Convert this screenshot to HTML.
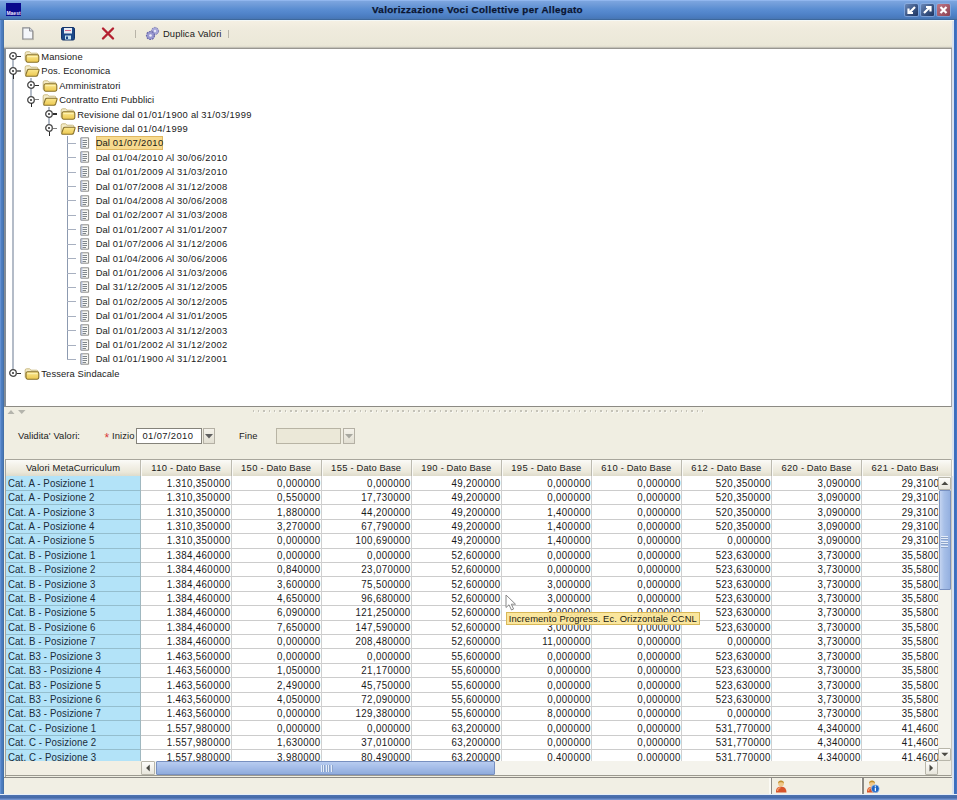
<!DOCTYPE html><html><head><meta charset="utf-8"><style>
*{margin:0;padding:0;box-sizing:border-box}
html,body{width:957px;height:800px;overflow:hidden;background:#f0eee2;font-family:"Liberation Sans", sans-serif;;color:#1c1c1c}
.a{position:absolute}
.t{position:absolute;white-space:pre;line-height:14.41px;height:14.41px;font-size:9.4px;letter-spacing:0.1px;color:#1a1a1a;margin-top:0.7px}
.d{letter-spacing:0.38px}
svg{position:absolute;overflow:visible}
</style></head><body>
<div class="a" style="left:0;top:0;width:4px;height:800px;background:linear-gradient(90deg,#74a0e0 0,#5080c4 1px,#4878b8 3px,#406898 4px)"></div>
<div class="a" style="left:953.5px;top:0;width:3.5px;height:800px;background:linear-gradient(90deg,#3c70c0,#3a6cbc 2px,#5a88d0 3.5px)"></div>
<div class="a" style="left:0;top:794px;width:957px;height:6px;background:linear-gradient(180deg,#e6eef8 0,#e6eef8 1px,#4e72b0 1px,#456aa8 4px,#6e8ecc 5px,#7896d0 6px)"></div>
<div class="a" style="left:0;top:0;width:957px;height:20px;background:linear-gradient(180deg,#9cc0f6 0,#7ba4de 1.5px,#6d9ad8 5px,#5b8ed2 9px,#5285cb 13px,#4a7bbf 17px,#4876b2 19px,#3e689c 19px,#3e689c 20px)"></div>
<div class="a" style="left:4px;top:20px;width:950px;height:1px;background:#f4f8f6"></div>
<div class="a" style="left:6px;top:3px;width:15px;height:13px;background:#0a0a8c"></div>
<div class="a" style="left:6px;top:10.5px;width:15px;height:5px;font-weight:bold;font-size:5px;line-height:5px;color:#e8e8ff;text-align:center;overflow:hidden">Maest</div>
<div class="a" style="left:372px;top:1px;height:20px;line-height:18px;font-weight:bold;font-size:9.8px;letter-spacing:0.36px;color:#0a1430;-webkit-text-stroke:0.25px #0a1430;white-space:pre">Valorizzazione Voci Collettive per Allegato</div>
<div class="a" style="left:905px;top:4px;width:12.5px;height:11.5px;border-radius:1.5px;background:linear-gradient(135deg,#6a88b8,#3a5584 55%,#1e3460);box-shadow:0 0 0 1px rgba(150,180,225,.6)"></div>
<svg style="left:905px;top:4px" width="13" height="12"><path d="M10 3 L4.5 8.5 M3.5 4.5 V9 H8" stroke="#fff" stroke-width="2.2" fill="none"/></svg>
<div class="a" style="left:921px;top:4px;width:12.5px;height:11.5px;border-radius:1.5px;background:linear-gradient(135deg,#6a88b8,#3a5584 55%,#1e3460);box-shadow:0 0 0 1px rgba(150,180,225,.6)"></div>
<svg style="left:921px;top:4px" width="13" height="12"><path d="M3 9 L8.5 3.5 M5 3 H9.5 V7.5" stroke="#fff" stroke-width="2.2" fill="none"/></svg>
<div class="a" style="left:937px;top:4px;width:12.5px;height:11.5px;border-radius:1.5px;background:linear-gradient(135deg,#c07888,#8c4050);box-shadow:0 0 0 1px rgba(150,180,225,.6)"></div>
<svg style="left:937px;top:4px" width="13" height="12"><path d="M3.5 3 L9.5 9 M9.5 3 L3.5 9" stroke="#fff" stroke-width="2.2" fill="none"/></svg>
<div class="a" style="left:4px;top:21px;width:950px;height:27px;background:linear-gradient(180deg,#f5f0e3 0,#efebdd 8px,#ebe8d8 24px,#dcd8c8 27px)"></div>
<div class="a" style="left:4px;top:47px;width:950px;height:1px;background:#c4c2b8"></div>
<div class="a" style="left:4px;top:48px;width:950px;height:1.3px;background:#989690"></div>
<svg style="left:22px;top:27px" width="12" height="13"><path d="M0.8 0.8 H7.5 L10.8 4 V12.2 H0.8 Z" fill="#f4f6fa" stroke="#8a8c90" stroke-width="1.2"/><path d="M7.5 0.8 V4 H10.8" fill="#d8dce4" stroke="#8a8c90" stroke-width="1"/><path d="M1.6 12.6 H11.4 V4.5" stroke="#b8b4aa" stroke-width="1" fill="none"/></svg>
<svg style="left:61px;top:27px" width="14" height="13"><rect x="0.5" y="0.5" width="13" height="12.5" rx="1.5" fill="#1c4888" stroke="#14346a"/><rect x="3" y="1" width="8" height="5.5" fill="#e8ecf4"/><rect x="4" y="3" width="6" height="1" fill="#d06a8a"/><rect x="4" y="8.5" width="6" height="4" fill="#c8e4f0"/><rect x="5" y="9.5" width="2" height="2.5" fill="#1c4888"/></svg>
<svg style="left:101px;top:27px" width="14" height="13"><path d="M2 1.5 L12 11.5 M12 1.5 L2 11.5" stroke="#b42030" stroke-width="2.4" stroke-linecap="round"/></svg>
<div class="a" style="left:135px;top:30px;width:1px;height:8px;background:#b8b4a8"></div>
<div class="a" style="left:228px;top:30px;width:1px;height:8px;background:#b8b4a8"></div>
<svg style="left:146px;top:27px" width="13" height="13"><circle cx="9" cy="4" r="3.6" fill="#a8a8d8" stroke="#7878b0" stroke-width="1" stroke-dasharray="1.6 1"/><circle cx="9" cy="4" r="1.2" fill="#e8e8f8"/><circle cx="4.5" cy="8.5" r="4" fill="#9898d0" stroke="#6868a8" stroke-width="1.2" stroke-dasharray="1.8 1"/><circle cx="4.5" cy="8.5" r="1.3" fill="#f0f0fa"/></svg>
<div class="t" style="left:163px;top:26.5px;">Duplica Valori</div>
<svg width="0" height="0" style="position:absolute"><defs><linearGradient id="fg" x1="0" y1="0" x2="0" y2="1"><stop offset="0" stop-color="#fbe890"/><stop offset="1" stop-color="#ecc850"/></linearGradient></defs></svg>
<div class="a" style="left:4px;top:49px;width:948px;height:358px;background:#fff;border-left:2px solid #848c96;border-right:1px solid #a4a8ac;border-bottom:1.5px solid #8c8a84"></div>
<div class="a" style="left:952px;top:21px;width:1.5px;height:773px;background:#d8e2f0"></div>
<div class="a" style="left:12.00px;top:59.90px;width:2px;height:310.02px;background:#b4bcc8"></div>
<div class="a" style="left:30.00px;top:78.31px;width:2px;height:17.82px;background:#b4bcc8"></div>
<div class="a" style="left:48.00px;top:107.13px;width:2px;height:17.82px;background:#b4bcc8"></div>
<div class="a" style="left:66.50px;top:135.95px;width:1.4px;height:223.56px;background:#8c9ab0"></div>
<svg style="left:9.40px;top:52.40px" width="8" height="8"><circle cx="4" cy="4" r="3.3" fill="#fff" stroke="#484848" stroke-width="1.3"/><circle cx="4" cy="4" r="1" fill="#303030"/></svg>
<div class="a" style="left:16.70px;top:55.80px;width:4.5px;height:1.3px;background:#303030"></div>
<svg style="left:23.90px;top:50.80px" width="16" height="12"><path d="M1.2 9.5 V2.2 Q1.2 0.8 2.6 0.8 H5.6 L7 2.2 H12.6 Q13.8 2.2 13.8 3.4 V5" fill="#f4ecc8" stroke="#cbbb84" stroke-width="1"/><rect x="2" y="3.8" width="12.8" height="7.4" rx="1.6" fill="url(#fg)" stroke="#86702c" stroke-width="1.1"/><rect x="3.4" y="5" width="10" height="1.2" fill="#fff6c0" opacity=".7"/></svg>
<div class="t" style="left:41.3px;top:49.20px">Mansione</div>
<svg style="left:9.40px;top:66.81px" width="8" height="8"><circle cx="4" cy="4" r="3.3" fill="#fff" stroke="#484848" stroke-width="1.3"/><circle cx="4" cy="4" r="1" fill="#303030"/></svg>
<div class="a" style="left:16.70px;top:70.21px;width:4.5px;height:1.3px;background:#808080"></div>
<div class="a" style="left:12.60px;top:74.11px;width:1.8px;height:4.5px;background:#282828"></div>
<svg style="left:23.90px;top:65.21px" width="16" height="12"><path d="M1.2 9.5 V2.2 Q1.2 0.8 2.6 0.8 H5.6 L7 2.2 H12.6 Q13.8 2.2 13.8 3.4 V5" fill="#f4ecc8" stroke="#cbbb84" stroke-width="1"/><path d="M2.8 11.2 Q1.4 11.2 1.8 9.8 L3.4 5.2 Q3.8 4.2 5 4.2 H14.2 Q15.4 4.2 15 5.4 L13.6 10 Q13.2 11.2 12 11.2 Z" fill="url(#fg)" stroke="#86702c" stroke-width="1.1"/></svg>
<div class="t" style="left:41.3px;top:63.61px">Pos. Economica</div>
<svg style="left:27.35px;top:81.22px" width="8" height="8"><circle cx="4" cy="4" r="3.3" fill="#fff" stroke="#484848" stroke-width="1.3"/><circle cx="4" cy="4" r="1" fill="#303030"/></svg>
<div class="a" style="left:34.65px;top:84.62px;width:4.5px;height:1.3px;background:#303030"></div>
<svg style="left:41.85px;top:79.62px" width="16" height="12"><path d="M1.2 9.5 V2.2 Q1.2 0.8 2.6 0.8 H5.6 L7 2.2 H12.6 Q13.8 2.2 13.8 3.4 V5" fill="#f4ecc8" stroke="#cbbb84" stroke-width="1"/><rect x="2" y="3.8" width="12.8" height="7.4" rx="1.6" fill="url(#fg)" stroke="#86702c" stroke-width="1.1"/><rect x="3.4" y="5" width="10" height="1.2" fill="#fff6c0" opacity=".7"/></svg>
<div class="t" style="left:59.25px;top:78.02px">Amministratori</div>
<svg style="left:27.35px;top:95.63px" width="8" height="8"><circle cx="4" cy="4" r="3.3" fill="#fff" stroke="#484848" stroke-width="1.3"/><circle cx="4" cy="4" r="1" fill="#303030"/></svg>
<div class="a" style="left:34.65px;top:99.03px;width:4.5px;height:1.3px;background:#808080"></div>
<div class="a" style="left:30.55px;top:102.93px;width:1.8px;height:4.5px;background:#282828"></div>
<svg style="left:41.85px;top:94.03px" width="16" height="12"><path d="M1.2 9.5 V2.2 Q1.2 0.8 2.6 0.8 H5.6 L7 2.2 H12.6 Q13.8 2.2 13.8 3.4 V5" fill="#f4ecc8" stroke="#cbbb84" stroke-width="1"/><path d="M2.8 11.2 Q1.4 11.2 1.8 9.8 L3.4 5.2 Q3.8 4.2 5 4.2 H14.2 Q15.4 4.2 15 5.4 L13.6 10 Q13.2 11.2 12 11.2 Z" fill="url(#fg)" stroke="#86702c" stroke-width="1.1"/></svg>
<div class="t" style="left:59.25px;top:92.42px">Contratto Enti Pubblici</div>
<svg style="left:45.30px;top:110.04px" width="8" height="8"><circle cx="4" cy="4" r="3.3" fill="#fff" stroke="#484848" stroke-width="1.3"/><circle cx="4" cy="4" r="1" fill="#303030"/></svg>
<div class="a" style="left:52.60px;top:113.44px;width:4.5px;height:1.3px;background:#303030"></div>
<svg style="left:59.80px;top:108.44px" width="16" height="12"><path d="M1.2 9.5 V2.2 Q1.2 0.8 2.6 0.8 H5.6 L7 2.2 H12.6 Q13.8 2.2 13.8 3.4 V5" fill="#f4ecc8" stroke="#cbbb84" stroke-width="1"/><rect x="2" y="3.8" width="12.8" height="7.4" rx="1.6" fill="url(#fg)" stroke="#86702c" stroke-width="1.1"/><rect x="3.4" y="5" width="10" height="1.2" fill="#fff6c0" opacity=".7"/></svg>
<div class="t" style="left:77.19999999999999px;top:106.83px">Revisione dal <span class="d">01/01/1900</span> al <span class="d">31/03/1999</span></div>
<svg style="left:45.30px;top:124.45px" width="8" height="8"><circle cx="4" cy="4" r="3.3" fill="#fff" stroke="#484848" stroke-width="1.3"/><circle cx="4" cy="4" r="1" fill="#303030"/></svg>
<div class="a" style="left:52.60px;top:127.85px;width:4.5px;height:1.3px;background:#808080"></div>
<div class="a" style="left:48.50px;top:131.75px;width:1.8px;height:4.5px;background:#282828"></div>
<svg style="left:59.80px;top:122.85px" width="16" height="12"><path d="M1.2 9.5 V2.2 Q1.2 0.8 2.6 0.8 H5.6 L7 2.2 H12.6 Q13.8 2.2 13.8 3.4 V5" fill="#f4ecc8" stroke="#cbbb84" stroke-width="1"/><path d="M2.8 11.2 Q1.4 11.2 1.8 9.8 L3.4 5.2 Q3.8 4.2 5 4.2 H14.2 Q15.4 4.2 15 5.4 L13.6 10 Q13.2 11.2 12 11.2 Z" fill="url(#fg)" stroke="#86702c" stroke-width="1.1"/></svg>
<div class="t" style="left:77.19999999999999px;top:121.24px">Revisione dal <span class="d">01/04/1999</span></div>
<div class="a" style="left:67.20px;top:143px;width:8.80px;height:1px;background:#a8b0c0"></div>
<svg style="left:80.00px;top:137.06px" width="10" height="12"><path d="M0.8 0.8 H8.6 V11.2 H0.8 Z" fill="#f8f8f4" stroke="#8c8c88" stroke-width="1"/><path d="M2.5 3.5 H7 M2.5 5.5 H7 M2.5 7.5 H7 M2.5 9.5 H6" stroke="#707880" stroke-width="0.9"/><path d="M1.8 0.3 V11.5" stroke="#a0b0e0" stroke-width="0.8"/></svg>
<div class="a" style="left:95.7px;top:136px;width:67.3px;height:13.8px;background:#f7da8e;border:1px solid #e0b860"></div>
<div class="t" style="left:95.7px;top:135.66px">Dal <span class="d">01/07/2010</span></div>
<div class="a" style="left:67.20px;top:157px;width:8.80px;height:1px;background:#a8b0c0"></div>
<svg style="left:80.00px;top:151.47px" width="10" height="12"><path d="M0.8 0.8 H8.6 V11.2 H0.8 Z" fill="#f8f8f4" stroke="#8c8c88" stroke-width="1"/><path d="M2.5 3.5 H7 M2.5 5.5 H7 M2.5 7.5 H7 M2.5 9.5 H6" stroke="#707880" stroke-width="0.9"/><path d="M1.8 0.3 V11.5" stroke="#a0b0e0" stroke-width="0.8"/></svg>
<div class="t" style="left:95.7px;top:150.06px">Dal <span class="d">01/04/2010</span> Al <span class="d">30/06/2010</span></div>
<div class="a" style="left:67.20px;top:172px;width:8.80px;height:1px;background:#a8b0c0"></div>
<svg style="left:80.00px;top:165.88px" width="10" height="12"><path d="M0.8 0.8 H8.6 V11.2 H0.8 Z" fill="#f8f8f4" stroke="#8c8c88" stroke-width="1"/><path d="M2.5 3.5 H7 M2.5 5.5 H7 M2.5 7.5 H7 M2.5 9.5 H6" stroke="#707880" stroke-width="0.9"/><path d="M1.8 0.3 V11.5" stroke="#a0b0e0" stroke-width="0.8"/></svg>
<div class="t" style="left:95.7px;top:164.47px">Dal <span class="d">01/01/2009</span> Al <span class="d">31/03/2010</span></div>
<div class="a" style="left:67.20px;top:186px;width:8.80px;height:1px;background:#a8b0c0"></div>
<svg style="left:80.00px;top:180.29px" width="10" height="12"><path d="M0.8 0.8 H8.6 V11.2 H0.8 Z" fill="#f8f8f4" stroke="#8c8c88" stroke-width="1"/><path d="M2.5 3.5 H7 M2.5 5.5 H7 M2.5 7.5 H7 M2.5 9.5 H6" stroke="#707880" stroke-width="0.9"/><path d="M1.8 0.3 V11.5" stroke="#a0b0e0" stroke-width="0.8"/></svg>
<div class="t" style="left:95.7px;top:178.88px">Dal <span class="d">01/07/2008</span> Al <span class="d">31/12/2008</span></div>
<div class="a" style="left:67.20px;top:200px;width:8.80px;height:1px;background:#a8b0c0"></div>
<svg style="left:80.00px;top:194.70px" width="10" height="12"><path d="M0.8 0.8 H8.6 V11.2 H0.8 Z" fill="#f8f8f4" stroke="#8c8c88" stroke-width="1"/><path d="M2.5 3.5 H7 M2.5 5.5 H7 M2.5 7.5 H7 M2.5 9.5 H6" stroke="#707880" stroke-width="0.9"/><path d="M1.8 0.3 V11.5" stroke="#a0b0e0" stroke-width="0.8"/></svg>
<div class="t" style="left:95.7px;top:193.29px">Dal <span class="d">01/04/2008</span> Al <span class="d">30/06/2008</span></div>
<div class="a" style="left:67.20px;top:215px;width:8.80px;height:1px;background:#a8b0c0"></div>
<svg style="left:80.00px;top:209.11px" width="10" height="12"><path d="M0.8 0.8 H8.6 V11.2 H0.8 Z" fill="#f8f8f4" stroke="#8c8c88" stroke-width="1"/><path d="M2.5 3.5 H7 M2.5 5.5 H7 M2.5 7.5 H7 M2.5 9.5 H6" stroke="#707880" stroke-width="0.9"/><path d="M1.8 0.3 V11.5" stroke="#a0b0e0" stroke-width="0.8"/></svg>
<div class="t" style="left:95.7px;top:207.70px">Dal <span class="d">01/02/2007</span> Al <span class="d">31/03/2008</span></div>
<div class="a" style="left:67.20px;top:229px;width:8.80px;height:1px;background:#a8b0c0"></div>
<svg style="left:80.00px;top:223.52px" width="10" height="12"><path d="M0.8 0.8 H8.6 V11.2 H0.8 Z" fill="#f8f8f4" stroke="#8c8c88" stroke-width="1"/><path d="M2.5 3.5 H7 M2.5 5.5 H7 M2.5 7.5 H7 M2.5 9.5 H6" stroke="#707880" stroke-width="0.9"/><path d="M1.8 0.3 V11.5" stroke="#a0b0e0" stroke-width="0.8"/></svg>
<div class="t" style="left:95.7px;top:222.12px">Dal <span class="d">01/01/2007</span> Al <span class="d">31/01/2007</span></div>
<div class="a" style="left:67.20px;top:244px;width:8.80px;height:1px;background:#a8b0c0"></div>
<svg style="left:80.00px;top:237.93px" width="10" height="12"><path d="M0.8 0.8 H8.6 V11.2 H0.8 Z" fill="#f8f8f4" stroke="#8c8c88" stroke-width="1"/><path d="M2.5 3.5 H7 M2.5 5.5 H7 M2.5 7.5 H7 M2.5 9.5 H6" stroke="#707880" stroke-width="0.9"/><path d="M1.8 0.3 V11.5" stroke="#a0b0e0" stroke-width="0.8"/></svg>
<div class="t" style="left:95.7px;top:236.53px">Dal <span class="d">01/07/2006</span> Al <span class="d">31/12/2006</span></div>
<div class="a" style="left:67.20px;top:258px;width:8.80px;height:1px;background:#a8b0c0"></div>
<svg style="left:80.00px;top:252.34px" width="10" height="12"><path d="M0.8 0.8 H8.6 V11.2 H0.8 Z" fill="#f8f8f4" stroke="#8c8c88" stroke-width="1"/><path d="M2.5 3.5 H7 M2.5 5.5 H7 M2.5 7.5 H7 M2.5 9.5 H6" stroke="#707880" stroke-width="0.9"/><path d="M1.8 0.3 V11.5" stroke="#a0b0e0" stroke-width="0.8"/></svg>
<div class="t" style="left:95.7px;top:250.93px">Dal <span class="d">01/04/2006</span> Al <span class="d">30/06/2006</span></div>
<div class="a" style="left:67.20px;top:273px;width:8.80px;height:1px;background:#a8b0c0"></div>
<svg style="left:80.00px;top:266.75px" width="10" height="12"><path d="M0.8 0.8 H8.6 V11.2 H0.8 Z" fill="#f8f8f4" stroke="#8c8c88" stroke-width="1"/><path d="M2.5 3.5 H7 M2.5 5.5 H7 M2.5 7.5 H7 M2.5 9.5 H6" stroke="#707880" stroke-width="0.9"/><path d="M1.8 0.3 V11.5" stroke="#a0b0e0" stroke-width="0.8"/></svg>
<div class="t" style="left:95.7px;top:265.35px">Dal <span class="d">01/01/2006</span> Al <span class="d">31/03/2006</span></div>
<div class="a" style="left:67.20px;top:287px;width:8.80px;height:1px;background:#a8b0c0"></div>
<svg style="left:80.00px;top:281.16px" width="10" height="12"><path d="M0.8 0.8 H8.6 V11.2 H0.8 Z" fill="#f8f8f4" stroke="#8c8c88" stroke-width="1"/><path d="M2.5 3.5 H7 M2.5 5.5 H7 M2.5 7.5 H7 M2.5 9.5 H6" stroke="#707880" stroke-width="0.9"/><path d="M1.8 0.3 V11.5" stroke="#a0b0e0" stroke-width="0.8"/></svg>
<div class="t" style="left:95.7px;top:279.75px">Dal <span class="d">31/12/2005</span> Al <span class="d">31/12/2005</span></div>
<div class="a" style="left:67.20px;top:301px;width:8.80px;height:1px;background:#a8b0c0"></div>
<svg style="left:80.00px;top:295.57px" width="10" height="12"><path d="M0.8 0.8 H8.6 V11.2 H0.8 Z" fill="#f8f8f4" stroke="#8c8c88" stroke-width="1"/><path d="M2.5 3.5 H7 M2.5 5.5 H7 M2.5 7.5 H7 M2.5 9.5 H6" stroke="#707880" stroke-width="0.9"/><path d="M1.8 0.3 V11.5" stroke="#a0b0e0" stroke-width="0.8"/></svg>
<div class="t" style="left:95.7px;top:294.17px">Dal <span class="d">01/02/2005</span> Al <span class="d">30/12/2005</span></div>
<div class="a" style="left:67.20px;top:316px;width:8.80px;height:1px;background:#a8b0c0"></div>
<svg style="left:80.00px;top:309.98px" width="10" height="12"><path d="M0.8 0.8 H8.6 V11.2 H0.8 Z" fill="#f8f8f4" stroke="#8c8c88" stroke-width="1"/><path d="M2.5 3.5 H7 M2.5 5.5 H7 M2.5 7.5 H7 M2.5 9.5 H6" stroke="#707880" stroke-width="0.9"/><path d="M1.8 0.3 V11.5" stroke="#a0b0e0" stroke-width="0.8"/></svg>
<div class="t" style="left:95.7px;top:308.57px">Dal <span class="d">01/01/2004</span> Al <span class="d">31/01/2005</span></div>
<div class="a" style="left:67.20px;top:330px;width:8.80px;height:1px;background:#a8b0c0"></div>
<svg style="left:80.00px;top:324.39px" width="10" height="12"><path d="M0.8 0.8 H8.6 V11.2 H0.8 Z" fill="#f8f8f4" stroke="#8c8c88" stroke-width="1"/><path d="M2.5 3.5 H7 M2.5 5.5 H7 M2.5 7.5 H7 M2.5 9.5 H6" stroke="#707880" stroke-width="0.9"/><path d="M1.8 0.3 V11.5" stroke="#a0b0e0" stroke-width="0.8"/></svg>
<div class="t" style="left:95.7px;top:322.99px">Dal <span class="d">01/01/2003</span> Al <span class="d">31/12/2003</span></div>
<div class="a" style="left:67.20px;top:345px;width:8.80px;height:1px;background:#a8b0c0"></div>
<svg style="left:80.00px;top:338.80px" width="10" height="12"><path d="M0.8 0.8 H8.6 V11.2 H0.8 Z" fill="#f8f8f4" stroke="#8c8c88" stroke-width="1"/><path d="M2.5 3.5 H7 M2.5 5.5 H7 M2.5 7.5 H7 M2.5 9.5 H6" stroke="#707880" stroke-width="0.9"/><path d="M1.8 0.3 V11.5" stroke="#a0b0e0" stroke-width="0.8"/></svg>
<div class="t" style="left:95.7px;top:337.39px">Dal <span class="d">01/01/2002</span> Al <span class="d">31/12/2002</span></div>
<div class="a" style="left:67.20px;top:359px;width:8.80px;height:1px;background:#a8b0c0"></div>
<svg style="left:80.00px;top:353.21px" width="10" height="12"><path d="M0.8 0.8 H8.6 V11.2 H0.8 Z" fill="#f8f8f4" stroke="#8c8c88" stroke-width="1"/><path d="M2.5 3.5 H7 M2.5 5.5 H7 M2.5 7.5 H7 M2.5 9.5 H6" stroke="#707880" stroke-width="0.9"/><path d="M1.8 0.3 V11.5" stroke="#a0b0e0" stroke-width="0.8"/></svg>
<div class="t" style="left:95.7px;top:351.81px">Dal <span class="d">01/01/1900</span> Al <span class="d">31/12/2001</span></div>
<svg style="left:9.40px;top:369.42px" width="8" height="8"><circle cx="4" cy="4" r="3.3" fill="#fff" stroke="#484848" stroke-width="1.3"/><circle cx="4" cy="4" r="1" fill="#303030"/></svg>
<div class="a" style="left:16.70px;top:372.82px;width:4.5px;height:1.3px;background:#303030"></div>
<svg style="left:23.90px;top:367.82px" width="16" height="12"><path d="M1.2 9.5 V2.2 Q1.2 0.8 2.6 0.8 H5.6 L7 2.2 H12.6 Q13.8 2.2 13.8 3.4 V5" fill="#f4ecc8" stroke="#cbbb84" stroke-width="1"/><rect x="2" y="3.8" width="12.8" height="7.4" rx="1.6" fill="url(#fg)" stroke="#86702c" stroke-width="1.1"/><rect x="3.4" y="5" width="10" height="1.2" fill="#fff6c0" opacity=".7"/></svg>
<div class="t" style="left:41.3px;top:366.21px">Tessera Sindacale</div>
<svg style="left:7px;top:408.5px" width="20" height="6"><path d="M0.5 5 L4 1 L7.5 5 Z" fill="#b4b4ac"/><path d="M11 1 L18.5 1 L14.75 5 Z" fill="#b4b4ac"/></svg>
<div class="a" style="left:252.50px;top:410px;width:1.6px;height:1.6px;background:#c4c2b8;box-shadow:0.8px 0.8px 0 #fcfcf8"></div><div class="a" style="left:257.85px;top:410px;width:1.6px;height:1.6px;background:#c4c2b8;box-shadow:0.8px 0.8px 0 #fcfcf8"></div><div class="a" style="left:263.20px;top:410px;width:1.6px;height:1.6px;background:#c4c2b8;box-shadow:0.8px 0.8px 0 #fcfcf8"></div><div class="a" style="left:268.55px;top:410px;width:1.6px;height:1.6px;background:#c4c2b8;box-shadow:0.8px 0.8px 0 #fcfcf8"></div><div class="a" style="left:273.90px;top:410px;width:1.6px;height:1.6px;background:#c4c2b8;box-shadow:0.8px 0.8px 0 #fcfcf8"></div><div class="a" style="left:279.25px;top:410px;width:1.6px;height:1.6px;background:#c4c2b8;box-shadow:0.8px 0.8px 0 #fcfcf8"></div><div class="a" style="left:284.60px;top:410px;width:1.6px;height:1.6px;background:#c4c2b8;box-shadow:0.8px 0.8px 0 #fcfcf8"></div><div class="a" style="left:289.95px;top:410px;width:1.6px;height:1.6px;background:#c4c2b8;box-shadow:0.8px 0.8px 0 #fcfcf8"></div><div class="a" style="left:295.30px;top:410px;width:1.6px;height:1.6px;background:#c4c2b8;box-shadow:0.8px 0.8px 0 #fcfcf8"></div><div class="a" style="left:300.65px;top:410px;width:1.6px;height:1.6px;background:#c4c2b8;box-shadow:0.8px 0.8px 0 #fcfcf8"></div><div class="a" style="left:306.00px;top:410px;width:1.6px;height:1.6px;background:#c4c2b8;box-shadow:0.8px 0.8px 0 #fcfcf8"></div><div class="a" style="left:311.35px;top:410px;width:1.6px;height:1.6px;background:#c4c2b8;box-shadow:0.8px 0.8px 0 #fcfcf8"></div><div class="a" style="left:316.70px;top:410px;width:1.6px;height:1.6px;background:#c4c2b8;box-shadow:0.8px 0.8px 0 #fcfcf8"></div><div class="a" style="left:322.05px;top:410px;width:1.6px;height:1.6px;background:#c4c2b8;box-shadow:0.8px 0.8px 0 #fcfcf8"></div><div class="a" style="left:327.40px;top:410px;width:1.6px;height:1.6px;background:#c4c2b8;box-shadow:0.8px 0.8px 0 #fcfcf8"></div><div class="a" style="left:332.75px;top:410px;width:1.6px;height:1.6px;background:#c4c2b8;box-shadow:0.8px 0.8px 0 #fcfcf8"></div><div class="a" style="left:338.10px;top:410px;width:1.6px;height:1.6px;background:#c4c2b8;box-shadow:0.8px 0.8px 0 #fcfcf8"></div><div class="a" style="left:343.45px;top:410px;width:1.6px;height:1.6px;background:#c4c2b8;box-shadow:0.8px 0.8px 0 #fcfcf8"></div><div class="a" style="left:348.80px;top:410px;width:1.6px;height:1.6px;background:#c4c2b8;box-shadow:0.8px 0.8px 0 #fcfcf8"></div><div class="a" style="left:354.15px;top:410px;width:1.6px;height:1.6px;background:#c4c2b8;box-shadow:0.8px 0.8px 0 #fcfcf8"></div><div class="a" style="left:359.50px;top:410px;width:1.6px;height:1.6px;background:#c4c2b8;box-shadow:0.8px 0.8px 0 #fcfcf8"></div><div class="a" style="left:364.85px;top:410px;width:1.6px;height:1.6px;background:#c4c2b8;box-shadow:0.8px 0.8px 0 #fcfcf8"></div><div class="a" style="left:370.20px;top:410px;width:1.6px;height:1.6px;background:#c4c2b8;box-shadow:0.8px 0.8px 0 #fcfcf8"></div><div class="a" style="left:375.55px;top:410px;width:1.6px;height:1.6px;background:#c4c2b8;box-shadow:0.8px 0.8px 0 #fcfcf8"></div><div class="a" style="left:380.90px;top:410px;width:1.6px;height:1.6px;background:#c4c2b8;box-shadow:0.8px 0.8px 0 #fcfcf8"></div><div class="a" style="left:386.25px;top:410px;width:1.6px;height:1.6px;background:#c4c2b8;box-shadow:0.8px 0.8px 0 #fcfcf8"></div><div class="a" style="left:391.60px;top:410px;width:1.6px;height:1.6px;background:#c4c2b8;box-shadow:0.8px 0.8px 0 #fcfcf8"></div><div class="a" style="left:396.95px;top:410px;width:1.6px;height:1.6px;background:#c4c2b8;box-shadow:0.8px 0.8px 0 #fcfcf8"></div><div class="a" style="left:402.30px;top:410px;width:1.6px;height:1.6px;background:#c4c2b8;box-shadow:0.8px 0.8px 0 #fcfcf8"></div><div class="a" style="left:407.65px;top:410px;width:1.6px;height:1.6px;background:#c4c2b8;box-shadow:0.8px 0.8px 0 #fcfcf8"></div><div class="a" style="left:413.00px;top:410px;width:1.6px;height:1.6px;background:#c4c2b8;box-shadow:0.8px 0.8px 0 #fcfcf8"></div><div class="a" style="left:418.35px;top:410px;width:1.6px;height:1.6px;background:#c4c2b8;box-shadow:0.8px 0.8px 0 #fcfcf8"></div><div class="a" style="left:423.70px;top:410px;width:1.6px;height:1.6px;background:#c4c2b8;box-shadow:0.8px 0.8px 0 #fcfcf8"></div><div class="a" style="left:429.05px;top:410px;width:1.6px;height:1.6px;background:#c4c2b8;box-shadow:0.8px 0.8px 0 #fcfcf8"></div><div class="a" style="left:434.40px;top:410px;width:1.6px;height:1.6px;background:#c4c2b8;box-shadow:0.8px 0.8px 0 #fcfcf8"></div><div class="a" style="left:439.75px;top:410px;width:1.6px;height:1.6px;background:#c4c2b8;box-shadow:0.8px 0.8px 0 #fcfcf8"></div><div class="a" style="left:445.10px;top:410px;width:1.6px;height:1.6px;background:#c4c2b8;box-shadow:0.8px 0.8px 0 #fcfcf8"></div><div class="a" style="left:450.45px;top:410px;width:1.6px;height:1.6px;background:#c4c2b8;box-shadow:0.8px 0.8px 0 #fcfcf8"></div><div class="a" style="left:455.80px;top:410px;width:1.6px;height:1.6px;background:#c4c2b8;box-shadow:0.8px 0.8px 0 #fcfcf8"></div><div class="a" style="left:461.15px;top:410px;width:1.6px;height:1.6px;background:#c4c2b8;box-shadow:0.8px 0.8px 0 #fcfcf8"></div><div class="a" style="left:466.50px;top:410px;width:1.6px;height:1.6px;background:#c4c2b8;box-shadow:0.8px 0.8px 0 #fcfcf8"></div><div class="a" style="left:471.85px;top:410px;width:1.6px;height:1.6px;background:#c4c2b8;box-shadow:0.8px 0.8px 0 #fcfcf8"></div><div class="a" style="left:477.20px;top:410px;width:1.6px;height:1.6px;background:#c4c2b8;box-shadow:0.8px 0.8px 0 #fcfcf8"></div><div class="a" style="left:482.55px;top:410px;width:1.6px;height:1.6px;background:#c4c2b8;box-shadow:0.8px 0.8px 0 #fcfcf8"></div><div class="a" style="left:487.90px;top:410px;width:1.6px;height:1.6px;background:#c4c2b8;box-shadow:0.8px 0.8px 0 #fcfcf8"></div><div class="a" style="left:493.25px;top:410px;width:1.6px;height:1.6px;background:#c4c2b8;box-shadow:0.8px 0.8px 0 #fcfcf8"></div><div class="a" style="left:498.60px;top:410px;width:1.6px;height:1.6px;background:#c4c2b8;box-shadow:0.8px 0.8px 0 #fcfcf8"></div><div class="a" style="left:503.95px;top:410px;width:1.6px;height:1.6px;background:#c4c2b8;box-shadow:0.8px 0.8px 0 #fcfcf8"></div><div class="a" style="left:509.30px;top:410px;width:1.6px;height:1.6px;background:#c4c2b8;box-shadow:0.8px 0.8px 0 #fcfcf8"></div><div class="a" style="left:514.65px;top:410px;width:1.6px;height:1.6px;background:#c4c2b8;box-shadow:0.8px 0.8px 0 #fcfcf8"></div><div class="a" style="left:520.00px;top:410px;width:1.6px;height:1.6px;background:#c4c2b8;box-shadow:0.8px 0.8px 0 #fcfcf8"></div><div class="a" style="left:525.35px;top:410px;width:1.6px;height:1.6px;background:#c4c2b8;box-shadow:0.8px 0.8px 0 #fcfcf8"></div><div class="a" style="left:530.70px;top:410px;width:1.6px;height:1.6px;background:#c4c2b8;box-shadow:0.8px 0.8px 0 #fcfcf8"></div><div class="a" style="left:536.05px;top:410px;width:1.6px;height:1.6px;background:#c4c2b8;box-shadow:0.8px 0.8px 0 #fcfcf8"></div><div class="a" style="left:541.40px;top:410px;width:1.6px;height:1.6px;background:#c4c2b8;box-shadow:0.8px 0.8px 0 #fcfcf8"></div><div class="a" style="left:546.75px;top:410px;width:1.6px;height:1.6px;background:#c4c2b8;box-shadow:0.8px 0.8px 0 #fcfcf8"></div><div class="a" style="left:552.10px;top:410px;width:1.6px;height:1.6px;background:#c4c2b8;box-shadow:0.8px 0.8px 0 #fcfcf8"></div><div class="a" style="left:557.45px;top:410px;width:1.6px;height:1.6px;background:#c4c2b8;box-shadow:0.8px 0.8px 0 #fcfcf8"></div><div class="a" style="left:562.80px;top:410px;width:1.6px;height:1.6px;background:#c4c2b8;box-shadow:0.8px 0.8px 0 #fcfcf8"></div><div class="a" style="left:568.15px;top:410px;width:1.6px;height:1.6px;background:#c4c2b8;box-shadow:0.8px 0.8px 0 #fcfcf8"></div><div class="a" style="left:573.50px;top:410px;width:1.6px;height:1.6px;background:#c4c2b8;box-shadow:0.8px 0.8px 0 #fcfcf8"></div><div class="a" style="left:578.85px;top:410px;width:1.6px;height:1.6px;background:#c4c2b8;box-shadow:0.8px 0.8px 0 #fcfcf8"></div><div class="a" style="left:584.20px;top:410px;width:1.6px;height:1.6px;background:#c4c2b8;box-shadow:0.8px 0.8px 0 #fcfcf8"></div><div class="a" style="left:589.55px;top:410px;width:1.6px;height:1.6px;background:#c4c2b8;box-shadow:0.8px 0.8px 0 #fcfcf8"></div><div class="a" style="left:594.90px;top:410px;width:1.6px;height:1.6px;background:#c4c2b8;box-shadow:0.8px 0.8px 0 #fcfcf8"></div><div class="a" style="left:600.25px;top:410px;width:1.6px;height:1.6px;background:#c4c2b8;box-shadow:0.8px 0.8px 0 #fcfcf8"></div><div class="a" style="left:605.60px;top:410px;width:1.6px;height:1.6px;background:#c4c2b8;box-shadow:0.8px 0.8px 0 #fcfcf8"></div><div class="a" style="left:610.95px;top:410px;width:1.6px;height:1.6px;background:#c4c2b8;box-shadow:0.8px 0.8px 0 #fcfcf8"></div><div class="a" style="left:616.30px;top:410px;width:1.6px;height:1.6px;background:#c4c2b8;box-shadow:0.8px 0.8px 0 #fcfcf8"></div><div class="a" style="left:621.65px;top:410px;width:1.6px;height:1.6px;background:#c4c2b8;box-shadow:0.8px 0.8px 0 #fcfcf8"></div><div class="a" style="left:627.00px;top:410px;width:1.6px;height:1.6px;background:#c4c2b8;box-shadow:0.8px 0.8px 0 #fcfcf8"></div><div class="a" style="left:632.35px;top:410px;width:1.6px;height:1.6px;background:#c4c2b8;box-shadow:0.8px 0.8px 0 #fcfcf8"></div><div class="a" style="left:637.70px;top:410px;width:1.6px;height:1.6px;background:#c4c2b8;box-shadow:0.8px 0.8px 0 #fcfcf8"></div><div class="a" style="left:643.05px;top:410px;width:1.6px;height:1.6px;background:#c4c2b8;box-shadow:0.8px 0.8px 0 #fcfcf8"></div><div class="a" style="left:648.40px;top:410px;width:1.6px;height:1.6px;background:#c4c2b8;box-shadow:0.8px 0.8px 0 #fcfcf8"></div><div class="a" style="left:653.75px;top:410px;width:1.6px;height:1.6px;background:#c4c2b8;box-shadow:0.8px 0.8px 0 #fcfcf8"></div><div class="a" style="left:659.10px;top:410px;width:1.6px;height:1.6px;background:#c4c2b8;box-shadow:0.8px 0.8px 0 #fcfcf8"></div><div class="a" style="left:664.45px;top:410px;width:1.6px;height:1.6px;background:#c4c2b8;box-shadow:0.8px 0.8px 0 #fcfcf8"></div><div class="a" style="left:669.80px;top:410px;width:1.6px;height:1.6px;background:#c4c2b8;box-shadow:0.8px 0.8px 0 #fcfcf8"></div><div class="a" style="left:675.15px;top:410px;width:1.6px;height:1.6px;background:#c4c2b8;box-shadow:0.8px 0.8px 0 #fcfcf8"></div><div class="a" style="left:680.50px;top:410px;width:1.6px;height:1.6px;background:#c4c2b8;box-shadow:0.8px 0.8px 0 #fcfcf8"></div><div class="a" style="left:685.85px;top:410px;width:1.6px;height:1.6px;background:#c4c2b8;box-shadow:0.8px 0.8px 0 #fcfcf8"></div><div class="a" style="left:691.20px;top:410px;width:1.6px;height:1.6px;background:#c4c2b8;box-shadow:0.8px 0.8px 0 #fcfcf8"></div><div class="a" style="left:696.55px;top:410px;width:1.6px;height:1.6px;background:#c4c2b8;box-shadow:0.8px 0.8px 0 #fcfcf8"></div><div class="a" style="left:701.90px;top:410px;width:1.6px;height:1.6px;background:#c4c2b8;box-shadow:0.8px 0.8px 0 #fcfcf8"></div>
<div class="t" style="left:18px;top:428.5px;">Validita' Valori:</div>
<div class="t" style="left:104.5px;top:430px;color:#d83838;font-size:12px;letter-spacing:0">*</div>
<div class="t" style="left:112px;top:428.5px;">Inizio</div>
<div class="a" style="left:136px;top:428px;width:65.5px;height:15.5px;background:#fff;border:1px solid #84827a"></div>
<div class="t" style="left:142.5px;top:428.5px;"><span class="d">01/07/2010</span></div>
<div class="a" style="left:203.3px;top:427.5px;width:12px;height:16px;background:linear-gradient(180deg,#f4f2ea,#e2dfd2);border:1px solid #b4b0a4"></div>
<svg style="left:203.3px;top:427.5px" width="12" height="16"><path d="M2 6 H10 L6 10.5 Z" fill="#606060"/></svg>
<div class="t" style="left:239px;top:428.5px;">Fine</div>
<div class="a" style="left:276px;top:428px;width:65px;height:15.5px;background:#ebe8d8;border:1px solid #b8b4a4"></div>
<div class="a" style="left:342.8px;top:427.5px;width:12px;height:16px;background:linear-gradient(180deg,#f4f2ea,#e2dfd2);border:1px solid #b4b0a4"></div>
<svg style="left:342.8px;top:427.5px" width="12" height="16"><path d="M2 6 H10 L6 10.5 Z" fill="#a8a8a0"/></svg>
<div class="a" style="left:5px;top:459.0px;width:946.5px;height:1px;background:#a8a69c"></div>
<div class="a" style="left:5px;top:460.0px;width:946.5px;height:16.0px;background:linear-gradient(180deg,#fbfbf8 0,#f4f2ea 5px,#ebe8da 12px,#dedbcb 16px)"></div>
<div class="a" style="left:5px;top:460.0px;width:1px;height:317px;background:#a4a4a0"></div>
<div class="a" style="left:140px;top:460.0px;width:1px;height:16.0px;background:#bcbab0"></div>
<div class="a" style="left:141px;top:460.0px;width:1px;height:16.0px;background:#fafaf6"></div>
<div class="a" style="left:231px;top:460.0px;width:1px;height:16.0px;background:#bcbab0"></div>
<div class="a" style="left:232px;top:460.0px;width:1px;height:16.0px;background:#fafaf6"></div>
<div class="a" style="left:321px;top:460.0px;width:1px;height:16.0px;background:#bcbab0"></div>
<div class="a" style="left:322px;top:460.0px;width:1px;height:16.0px;background:#fafaf6"></div>
<div class="a" style="left:411px;top:460.0px;width:1px;height:16.0px;background:#bcbab0"></div>
<div class="a" style="left:412px;top:460.0px;width:1px;height:16.0px;background:#fafaf6"></div>
<div class="a" style="left:501px;top:460.0px;width:1px;height:16.0px;background:#bcbab0"></div>
<div class="a" style="left:502px;top:460.0px;width:1px;height:16.0px;background:#fafaf6"></div>
<div class="a" style="left:591px;top:460.0px;width:1px;height:16.0px;background:#bcbab0"></div>
<div class="a" style="left:592px;top:460.0px;width:1px;height:16.0px;background:#fafaf6"></div>
<div class="a" style="left:681px;top:460.0px;width:1px;height:16.0px;background:#bcbab0"></div>
<div class="a" style="left:682px;top:460.0px;width:1px;height:16.0px;background:#fafaf6"></div>
<div class="a" style="left:771px;top:460.0px;width:1px;height:16.0px;background:#bcbab0"></div>
<div class="a" style="left:772px;top:460.0px;width:1px;height:16.0px;background:#fafaf6"></div>
<div class="a" style="left:861px;top:460.0px;width:1px;height:16.0px;background:#bcbab0"></div>
<div class="a" style="left:862px;top:460.0px;width:1px;height:16.0px;background:#fafaf6"></div>
<div class="a" style="left:951px;top:460.0px;width:1px;height:16.0px;background:#bcbab0"></div>
<div class="a" style="left:952px;top:460.0px;width:1px;height:16.0px;background:#fafaf6"></div>
<div class="t" style="left:5px;top:460.8px;width:136.0px;text-align:center;">Valori MetaCurriculum</div>
<div class="a" style="left:141.0px;top:460.0px;width:797.0px;height:16.0px;overflow:hidden">
<div class="t" style="left:0.00px;top:0.8px;width:90.06px;text-align:center;"><span class="d">110</span> - Dato Base</div>
<div class="t" style="left:90.06px;top:0.8px;width:90.06px;text-align:center;"><span class="d">150</span> - Dato Base</div>
<div class="t" style="left:180.12px;top:0.8px;width:90.06px;text-align:center;"><span class="d">155</span> - Dato Base</div>
<div class="t" style="left:270.18px;top:0.8px;width:90.06px;text-align:center;"><span class="d">190</span> - Dato Base</div>
<div class="t" style="left:360.24px;top:0.8px;width:90.06px;text-align:center;"><span class="d">195</span> - Dato Base</div>
<div class="t" style="left:450.30px;top:0.8px;width:90.06px;text-align:center;"><span class="d">610</span> - Dato Base</div>
<div class="t" style="left:540.36px;top:0.8px;width:90.06px;text-align:center;"><span class="d">612</span> - Dato Base</div>
<div class="t" style="left:630.42px;top:0.8px;width:90.06px;text-align:center;"><span class="d">620</span> - Dato Base</div>
<div class="t" style="left:720.48px;top:0.8px;width:90.06px;text-align:center;"><span class="d">621</span> - Dato Base</div>
</div>
<div class="a" style="left:6px;top:476.0px;width:135.00px;height:285.0px;background:#b3e3f8"></div>
<div class="a" style="left:141.00px;top:476.0px;width:797.00px;height:285.0px;background:#fff"></div>
<div class="a" style="left:6px;top:490px;width:135.00px;height:1px;background:#94bece"></div>
<div class="a" style="left:141.00px;top:490px;width:797.00px;height:1px;background:#cccccc"></div>
<div class="a" style="left:6px;top:504px;width:135.00px;height:1px;background:#94bece"></div>
<div class="a" style="left:141.00px;top:504px;width:797.00px;height:1px;background:#cccccc"></div>
<div class="a" style="left:6px;top:519px;width:135.00px;height:1px;background:#94bece"></div>
<div class="a" style="left:141.00px;top:519px;width:797.00px;height:1px;background:#cccccc"></div>
<div class="a" style="left:6px;top:533px;width:135.00px;height:1px;background:#94bece"></div>
<div class="a" style="left:141.00px;top:533px;width:797.00px;height:1px;background:#cccccc"></div>
<div class="a" style="left:6px;top:548px;width:135.00px;height:1px;background:#94bece"></div>
<div class="a" style="left:141.00px;top:548px;width:797.00px;height:1px;background:#cccccc"></div>
<div class="a" style="left:6px;top:562px;width:135.00px;height:1px;background:#94bece"></div>
<div class="a" style="left:141.00px;top:562px;width:797.00px;height:1px;background:#cccccc"></div>
<div class="a" style="left:6px;top:576px;width:135.00px;height:1px;background:#94bece"></div>
<div class="a" style="left:141.00px;top:576px;width:797.00px;height:1px;background:#cccccc"></div>
<div class="a" style="left:6px;top:591px;width:135.00px;height:1px;background:#94bece"></div>
<div class="a" style="left:141.00px;top:591px;width:797.00px;height:1px;background:#cccccc"></div>
<div class="a" style="left:6px;top:605px;width:135.00px;height:1px;background:#94bece"></div>
<div class="a" style="left:141.00px;top:605px;width:797.00px;height:1px;background:#cccccc"></div>
<div class="a" style="left:6px;top:620px;width:135.00px;height:1px;background:#94bece"></div>
<div class="a" style="left:141.00px;top:620px;width:797.00px;height:1px;background:#cccccc"></div>
<div class="a" style="left:6px;top:634px;width:135.00px;height:1px;background:#94bece"></div>
<div class="a" style="left:141.00px;top:634px;width:797.00px;height:1px;background:#cccccc"></div>
<div class="a" style="left:6px;top:648px;width:135.00px;height:1px;background:#94bece"></div>
<div class="a" style="left:141.00px;top:648px;width:797.00px;height:1px;background:#cccccc"></div>
<div class="a" style="left:6px;top:663px;width:135.00px;height:1px;background:#94bece"></div>
<div class="a" style="left:141.00px;top:663px;width:797.00px;height:1px;background:#cccccc"></div>
<div class="a" style="left:6px;top:677px;width:135.00px;height:1px;background:#94bece"></div>
<div class="a" style="left:141.00px;top:677px;width:797.00px;height:1px;background:#cccccc"></div>
<div class="a" style="left:6px;top:692px;width:135.00px;height:1px;background:#94bece"></div>
<div class="a" style="left:141.00px;top:692px;width:797.00px;height:1px;background:#cccccc"></div>
<div class="a" style="left:6px;top:706px;width:135.00px;height:1px;background:#94bece"></div>
<div class="a" style="left:141.00px;top:706px;width:797.00px;height:1px;background:#cccccc"></div>
<div class="a" style="left:6px;top:720px;width:135.00px;height:1px;background:#94bece"></div>
<div class="a" style="left:141.00px;top:720px;width:797.00px;height:1px;background:#cccccc"></div>
<div class="a" style="left:6px;top:735px;width:135.00px;height:1px;background:#94bece"></div>
<div class="a" style="left:141.00px;top:735px;width:797.00px;height:1px;background:#cccccc"></div>
<div class="a" style="left:6px;top:749px;width:135.00px;height:1px;background:#94bece"></div>
<div class="a" style="left:141.00px;top:749px;width:797.00px;height:1px;background:#cccccc"></div>
<div class="a" style="left:140px;top:476.0px;width:1px;height:285.0px;background:#a0b8c0"></div>
<div class="a" style="left:231px;top:476.0px;width:1px;height:285.0px;background:#d0d0d0"></div>
<div class="a" style="left:321px;top:476.0px;width:1px;height:285.0px;background:#d0d0d0"></div>
<div class="a" style="left:411px;top:476.0px;width:1px;height:285.0px;background:#d0d0d0"></div>
<div class="a" style="left:501px;top:476.0px;width:1px;height:285.0px;background:#d0d0d0"></div>
<div class="a" style="left:591px;top:476.0px;width:1px;height:285.0px;background:#d0d0d0"></div>
<div class="a" style="left:681px;top:476.0px;width:1px;height:285.0px;background:#d0d0d0"></div>
<div class="a" style="left:771px;top:476.0px;width:1px;height:285.0px;background:#d0d0d0"></div>
<div class="a" style="left:861px;top:476.0px;width:1px;height:285.0px;background:#d0d0d0"></div>
<div class="a" style="left:6px;top:476.0px;width:135.00px;height:285.0px;overflow:hidden">
<div class="t" style="left:2px;top:0.00px;color:#1c2c38;font-size:9.7px;margin-top:0.8px;transform:scaleY(1.09)">Cat. A - Posizione 1</div>
<div class="t" style="left:2px;top:14.41px;color:#1c2c38;font-size:9.7px;margin-top:0.8px;transform:scaleY(1.09)">Cat. A - Posizione 2</div>
<div class="t" style="left:2px;top:28.82px;color:#1c2c38;font-size:9.7px;margin-top:0.8px;transform:scaleY(1.09)">Cat. A - Posizione 3</div>
<div class="t" style="left:2px;top:43.23px;color:#1c2c38;font-size:9.7px;margin-top:0.8px;transform:scaleY(1.09)">Cat. A - Posizione 4</div>
<div class="t" style="left:2px;top:57.64px;color:#1c2c38;font-size:9.7px;margin-top:0.8px;transform:scaleY(1.09)">Cat. A - Posizione 5</div>
<div class="t" style="left:2px;top:72.05px;color:#1c2c38;font-size:9.7px;margin-top:0.8px;transform:scaleY(1.09)">Cat. B - Posizione 1</div>
<div class="t" style="left:2px;top:86.46px;color:#1c2c38;font-size:9.7px;margin-top:0.8px;transform:scaleY(1.09)">Cat. B - Posizione 2</div>
<div class="t" style="left:2px;top:100.87px;color:#1c2c38;font-size:9.7px;margin-top:0.8px;transform:scaleY(1.09)">Cat. B - Posizione 3</div>
<div class="t" style="left:2px;top:115.28px;color:#1c2c38;font-size:9.7px;margin-top:0.8px;transform:scaleY(1.09)">Cat. B - Posizione 4</div>
<div class="t" style="left:2px;top:129.69px;color:#1c2c38;font-size:9.7px;margin-top:0.8px;transform:scaleY(1.09)">Cat. B - Posizione 5</div>
<div class="t" style="left:2px;top:144.10px;color:#1c2c38;font-size:9.7px;margin-top:0.8px;transform:scaleY(1.09)">Cat. B - Posizione 6</div>
<div class="t" style="left:2px;top:158.51px;color:#1c2c38;font-size:9.7px;margin-top:0.8px;transform:scaleY(1.09)">Cat. B - Posizione 7</div>
<div class="t" style="left:2px;top:172.92px;color:#1c2c38;font-size:9.7px;margin-top:0.8px;transform:scaleY(1.09)">Cat. B3 - Posizione 3</div>
<div class="t" style="left:2px;top:187.33px;color:#1c2c38;font-size:9.7px;margin-top:0.8px;transform:scaleY(1.09)">Cat. B3 - Posizione 4</div>
<div class="t" style="left:2px;top:201.74px;color:#1c2c38;font-size:9.7px;margin-top:0.8px;transform:scaleY(1.09)">Cat. B3 - Posizione 5</div>
<div class="t" style="left:2px;top:216.15px;color:#1c2c38;font-size:9.7px;margin-top:0.8px;transform:scaleY(1.09)">Cat. B3 - Posizione 6</div>
<div class="t" style="left:2px;top:230.56px;color:#1c2c38;font-size:9.7px;margin-top:0.8px;transform:scaleY(1.09)">Cat. B3 - Posizione 7</div>
<div class="t" style="left:2px;top:244.97px;color:#1c2c38;font-size:9.7px;margin-top:0.8px;transform:scaleY(1.09)">Cat. C - Posizione 1</div>
<div class="t" style="left:2px;top:259.38px;color:#1c2c38;font-size:9.7px;margin-top:0.8px;transform:scaleY(1.09)">Cat. C - Posizione 2</div>
<div class="t" style="left:2px;top:273.79px;color:#1c2c38;font-size:9.7px;margin-top:0.8px;transform:scaleY(1.09)">Cat. C - Posizione 3</div>
</div>
<div class="a" style="left:141.00px;top:476.0px;width:797.00px;height:285.0px;overflow:hidden">
<div class="t" style="left:0.00px;top:0.00px;width:89.46px;text-align:right;font-size:9.7px;margin-top:0.8px;transform:scaleY(1.09);color:#1a1a1a"><span class="d">1.310,350000</span></div>
<div class="t" style="left:90.06px;top:0.00px;width:89.46px;text-align:right;font-size:9.7px;margin-top:0.8px;transform:scaleY(1.09);color:#1a1a1a"><span class="d">0,000000</span></div>
<div class="t" style="left:180.12px;top:0.00px;width:89.46px;text-align:right;font-size:9.7px;margin-top:0.8px;transform:scaleY(1.09);color:#1a1a1a"><span class="d">0,000000</span></div>
<div class="t" style="left:270.18px;top:0.00px;width:89.46px;text-align:right;font-size:9.7px;margin-top:0.8px;transform:scaleY(1.09);color:#1a1a1a"><span class="d">49,200000</span></div>
<div class="t" style="left:360.24px;top:0.00px;width:89.46px;text-align:right;font-size:9.7px;margin-top:0.8px;transform:scaleY(1.09);color:#1a1a1a"><span class="d">0,000000</span></div>
<div class="t" style="left:450.30px;top:0.00px;width:89.46px;text-align:right;font-size:9.7px;margin-top:0.8px;transform:scaleY(1.09);color:#1a1a1a"><span class="d">0,000000</span></div>
<div class="t" style="left:540.36px;top:0.00px;width:89.46px;text-align:right;font-size:9.7px;margin-top:0.8px;transform:scaleY(1.09);color:#1a1a1a"><span class="d">520,350000</span></div>
<div class="t" style="left:630.42px;top:0.00px;width:89.46px;text-align:right;font-size:9.7px;margin-top:0.8px;transform:scaleY(1.09);color:#1a1a1a"><span class="d">3,090000</span></div>
<div class="t" style="left:720.48px;top:0.00px;width:89.46px;text-align:right;font-size:9.7px;margin-top:0.8px;transform:scaleY(1.09);color:#1a1a1a"><span class="d">29,310000</span></div>
<div class="t" style="left:0.00px;top:14.41px;width:89.46px;text-align:right;font-size:9.7px;margin-top:0.8px;transform:scaleY(1.09);color:#1a1a1a"><span class="d">1.310,350000</span></div>
<div class="t" style="left:90.06px;top:14.41px;width:89.46px;text-align:right;font-size:9.7px;margin-top:0.8px;transform:scaleY(1.09);color:#1a1a1a"><span class="d">0,550000</span></div>
<div class="t" style="left:180.12px;top:14.41px;width:89.46px;text-align:right;font-size:9.7px;margin-top:0.8px;transform:scaleY(1.09);color:#1a1a1a"><span class="d">17,730000</span></div>
<div class="t" style="left:270.18px;top:14.41px;width:89.46px;text-align:right;font-size:9.7px;margin-top:0.8px;transform:scaleY(1.09);color:#1a1a1a"><span class="d">49,200000</span></div>
<div class="t" style="left:360.24px;top:14.41px;width:89.46px;text-align:right;font-size:9.7px;margin-top:0.8px;transform:scaleY(1.09);color:#1a1a1a"><span class="d">0,000000</span></div>
<div class="t" style="left:450.30px;top:14.41px;width:89.46px;text-align:right;font-size:9.7px;margin-top:0.8px;transform:scaleY(1.09);color:#1a1a1a"><span class="d">0,000000</span></div>
<div class="t" style="left:540.36px;top:14.41px;width:89.46px;text-align:right;font-size:9.7px;margin-top:0.8px;transform:scaleY(1.09);color:#1a1a1a"><span class="d">520,350000</span></div>
<div class="t" style="left:630.42px;top:14.41px;width:89.46px;text-align:right;font-size:9.7px;margin-top:0.8px;transform:scaleY(1.09);color:#1a1a1a"><span class="d">3,090000</span></div>
<div class="t" style="left:720.48px;top:14.41px;width:89.46px;text-align:right;font-size:9.7px;margin-top:0.8px;transform:scaleY(1.09);color:#1a1a1a"><span class="d">29,310000</span></div>
<div class="t" style="left:0.00px;top:28.82px;width:89.46px;text-align:right;font-size:9.7px;margin-top:0.8px;transform:scaleY(1.09);color:#1a1a1a"><span class="d">1.310,350000</span></div>
<div class="t" style="left:90.06px;top:28.82px;width:89.46px;text-align:right;font-size:9.7px;margin-top:0.8px;transform:scaleY(1.09);color:#1a1a1a"><span class="d">1,880000</span></div>
<div class="t" style="left:180.12px;top:28.82px;width:89.46px;text-align:right;font-size:9.7px;margin-top:0.8px;transform:scaleY(1.09);color:#1a1a1a"><span class="d">44,200000</span></div>
<div class="t" style="left:270.18px;top:28.82px;width:89.46px;text-align:right;font-size:9.7px;margin-top:0.8px;transform:scaleY(1.09);color:#1a1a1a"><span class="d">49,200000</span></div>
<div class="t" style="left:360.24px;top:28.82px;width:89.46px;text-align:right;font-size:9.7px;margin-top:0.8px;transform:scaleY(1.09);color:#1a1a1a"><span class="d">1,400000</span></div>
<div class="t" style="left:450.30px;top:28.82px;width:89.46px;text-align:right;font-size:9.7px;margin-top:0.8px;transform:scaleY(1.09);color:#1a1a1a"><span class="d">0,000000</span></div>
<div class="t" style="left:540.36px;top:28.82px;width:89.46px;text-align:right;font-size:9.7px;margin-top:0.8px;transform:scaleY(1.09);color:#1a1a1a"><span class="d">520,350000</span></div>
<div class="t" style="left:630.42px;top:28.82px;width:89.46px;text-align:right;font-size:9.7px;margin-top:0.8px;transform:scaleY(1.09);color:#1a1a1a"><span class="d">3,090000</span></div>
<div class="t" style="left:720.48px;top:28.82px;width:89.46px;text-align:right;font-size:9.7px;margin-top:0.8px;transform:scaleY(1.09);color:#1a1a1a"><span class="d">29,310000</span></div>
<div class="t" style="left:0.00px;top:43.23px;width:89.46px;text-align:right;font-size:9.7px;margin-top:0.8px;transform:scaleY(1.09);color:#1a1a1a"><span class="d">1.310,350000</span></div>
<div class="t" style="left:90.06px;top:43.23px;width:89.46px;text-align:right;font-size:9.7px;margin-top:0.8px;transform:scaleY(1.09);color:#1a1a1a"><span class="d">3,270000</span></div>
<div class="t" style="left:180.12px;top:43.23px;width:89.46px;text-align:right;font-size:9.7px;margin-top:0.8px;transform:scaleY(1.09);color:#1a1a1a"><span class="d">67,790000</span></div>
<div class="t" style="left:270.18px;top:43.23px;width:89.46px;text-align:right;font-size:9.7px;margin-top:0.8px;transform:scaleY(1.09);color:#1a1a1a"><span class="d">49,200000</span></div>
<div class="t" style="left:360.24px;top:43.23px;width:89.46px;text-align:right;font-size:9.7px;margin-top:0.8px;transform:scaleY(1.09);color:#1a1a1a"><span class="d">1,400000</span></div>
<div class="t" style="left:450.30px;top:43.23px;width:89.46px;text-align:right;font-size:9.7px;margin-top:0.8px;transform:scaleY(1.09);color:#1a1a1a"><span class="d">0,000000</span></div>
<div class="t" style="left:540.36px;top:43.23px;width:89.46px;text-align:right;font-size:9.7px;margin-top:0.8px;transform:scaleY(1.09);color:#1a1a1a"><span class="d">520,350000</span></div>
<div class="t" style="left:630.42px;top:43.23px;width:89.46px;text-align:right;font-size:9.7px;margin-top:0.8px;transform:scaleY(1.09);color:#1a1a1a"><span class="d">3,090000</span></div>
<div class="t" style="left:720.48px;top:43.23px;width:89.46px;text-align:right;font-size:9.7px;margin-top:0.8px;transform:scaleY(1.09);color:#1a1a1a"><span class="d">29,310000</span></div>
<div class="t" style="left:0.00px;top:57.64px;width:89.46px;text-align:right;font-size:9.7px;margin-top:0.8px;transform:scaleY(1.09);color:#1a1a1a"><span class="d">1.310,350000</span></div>
<div class="t" style="left:90.06px;top:57.64px;width:89.46px;text-align:right;font-size:9.7px;margin-top:0.8px;transform:scaleY(1.09);color:#1a1a1a"><span class="d">0,000000</span></div>
<div class="t" style="left:180.12px;top:57.64px;width:89.46px;text-align:right;font-size:9.7px;margin-top:0.8px;transform:scaleY(1.09);color:#1a1a1a"><span class="d">100,690000</span></div>
<div class="t" style="left:270.18px;top:57.64px;width:89.46px;text-align:right;font-size:9.7px;margin-top:0.8px;transform:scaleY(1.09);color:#1a1a1a"><span class="d">49,200000</span></div>
<div class="t" style="left:360.24px;top:57.64px;width:89.46px;text-align:right;font-size:9.7px;margin-top:0.8px;transform:scaleY(1.09);color:#1a1a1a"><span class="d">1,400000</span></div>
<div class="t" style="left:450.30px;top:57.64px;width:89.46px;text-align:right;font-size:9.7px;margin-top:0.8px;transform:scaleY(1.09);color:#1a1a1a"><span class="d">0,000000</span></div>
<div class="t" style="left:540.36px;top:57.64px;width:89.46px;text-align:right;font-size:9.7px;margin-top:0.8px;transform:scaleY(1.09);color:#1a1a1a"><span class="d">0,000000</span></div>
<div class="t" style="left:630.42px;top:57.64px;width:89.46px;text-align:right;font-size:9.7px;margin-top:0.8px;transform:scaleY(1.09);color:#1a1a1a"><span class="d">3,090000</span></div>
<div class="t" style="left:720.48px;top:57.64px;width:89.46px;text-align:right;font-size:9.7px;margin-top:0.8px;transform:scaleY(1.09);color:#1a1a1a"><span class="d">29,310000</span></div>
<div class="t" style="left:0.00px;top:72.05px;width:89.46px;text-align:right;font-size:9.7px;margin-top:0.8px;transform:scaleY(1.09);color:#1a1a1a"><span class="d">1.384,460000</span></div>
<div class="t" style="left:90.06px;top:72.05px;width:89.46px;text-align:right;font-size:9.7px;margin-top:0.8px;transform:scaleY(1.09);color:#1a1a1a"><span class="d">0,000000</span></div>
<div class="t" style="left:180.12px;top:72.05px;width:89.46px;text-align:right;font-size:9.7px;margin-top:0.8px;transform:scaleY(1.09);color:#1a1a1a"><span class="d">0,000000</span></div>
<div class="t" style="left:270.18px;top:72.05px;width:89.46px;text-align:right;font-size:9.7px;margin-top:0.8px;transform:scaleY(1.09);color:#1a1a1a"><span class="d">52,600000</span></div>
<div class="t" style="left:360.24px;top:72.05px;width:89.46px;text-align:right;font-size:9.7px;margin-top:0.8px;transform:scaleY(1.09);color:#1a1a1a"><span class="d">0,000000</span></div>
<div class="t" style="left:450.30px;top:72.05px;width:89.46px;text-align:right;font-size:9.7px;margin-top:0.8px;transform:scaleY(1.09);color:#1a1a1a"><span class="d">0,000000</span></div>
<div class="t" style="left:540.36px;top:72.05px;width:89.46px;text-align:right;font-size:9.7px;margin-top:0.8px;transform:scaleY(1.09);color:#1a1a1a"><span class="d">523,630000</span></div>
<div class="t" style="left:630.42px;top:72.05px;width:89.46px;text-align:right;font-size:9.7px;margin-top:0.8px;transform:scaleY(1.09);color:#1a1a1a"><span class="d">3,730000</span></div>
<div class="t" style="left:720.48px;top:72.05px;width:89.46px;text-align:right;font-size:9.7px;margin-top:0.8px;transform:scaleY(1.09);color:#1a1a1a"><span class="d">35,580000</span></div>
<div class="t" style="left:0.00px;top:86.46px;width:89.46px;text-align:right;font-size:9.7px;margin-top:0.8px;transform:scaleY(1.09);color:#1a1a1a"><span class="d">1.384,460000</span></div>
<div class="t" style="left:90.06px;top:86.46px;width:89.46px;text-align:right;font-size:9.7px;margin-top:0.8px;transform:scaleY(1.09);color:#1a1a1a"><span class="d">0,840000</span></div>
<div class="t" style="left:180.12px;top:86.46px;width:89.46px;text-align:right;font-size:9.7px;margin-top:0.8px;transform:scaleY(1.09);color:#1a1a1a"><span class="d">23,070000</span></div>
<div class="t" style="left:270.18px;top:86.46px;width:89.46px;text-align:right;font-size:9.7px;margin-top:0.8px;transform:scaleY(1.09);color:#1a1a1a"><span class="d">52,600000</span></div>
<div class="t" style="left:360.24px;top:86.46px;width:89.46px;text-align:right;font-size:9.7px;margin-top:0.8px;transform:scaleY(1.09);color:#1a1a1a"><span class="d">0,000000</span></div>
<div class="t" style="left:450.30px;top:86.46px;width:89.46px;text-align:right;font-size:9.7px;margin-top:0.8px;transform:scaleY(1.09);color:#1a1a1a"><span class="d">0,000000</span></div>
<div class="t" style="left:540.36px;top:86.46px;width:89.46px;text-align:right;font-size:9.7px;margin-top:0.8px;transform:scaleY(1.09);color:#1a1a1a"><span class="d">523,630000</span></div>
<div class="t" style="left:630.42px;top:86.46px;width:89.46px;text-align:right;font-size:9.7px;margin-top:0.8px;transform:scaleY(1.09);color:#1a1a1a"><span class="d">3,730000</span></div>
<div class="t" style="left:720.48px;top:86.46px;width:89.46px;text-align:right;font-size:9.7px;margin-top:0.8px;transform:scaleY(1.09);color:#1a1a1a"><span class="d">35,580000</span></div>
<div class="t" style="left:0.00px;top:100.87px;width:89.46px;text-align:right;font-size:9.7px;margin-top:0.8px;transform:scaleY(1.09);color:#1a1a1a"><span class="d">1.384,460000</span></div>
<div class="t" style="left:90.06px;top:100.87px;width:89.46px;text-align:right;font-size:9.7px;margin-top:0.8px;transform:scaleY(1.09);color:#1a1a1a"><span class="d">3,600000</span></div>
<div class="t" style="left:180.12px;top:100.87px;width:89.46px;text-align:right;font-size:9.7px;margin-top:0.8px;transform:scaleY(1.09);color:#1a1a1a"><span class="d">75,500000</span></div>
<div class="t" style="left:270.18px;top:100.87px;width:89.46px;text-align:right;font-size:9.7px;margin-top:0.8px;transform:scaleY(1.09);color:#1a1a1a"><span class="d">52,600000</span></div>
<div class="t" style="left:360.24px;top:100.87px;width:89.46px;text-align:right;font-size:9.7px;margin-top:0.8px;transform:scaleY(1.09);color:#1a1a1a"><span class="d">3,000000</span></div>
<div class="t" style="left:450.30px;top:100.87px;width:89.46px;text-align:right;font-size:9.7px;margin-top:0.8px;transform:scaleY(1.09);color:#1a1a1a"><span class="d">0,000000</span></div>
<div class="t" style="left:540.36px;top:100.87px;width:89.46px;text-align:right;font-size:9.7px;margin-top:0.8px;transform:scaleY(1.09);color:#1a1a1a"><span class="d">523,630000</span></div>
<div class="t" style="left:630.42px;top:100.87px;width:89.46px;text-align:right;font-size:9.7px;margin-top:0.8px;transform:scaleY(1.09);color:#1a1a1a"><span class="d">3,730000</span></div>
<div class="t" style="left:720.48px;top:100.87px;width:89.46px;text-align:right;font-size:9.7px;margin-top:0.8px;transform:scaleY(1.09);color:#1a1a1a"><span class="d">35,580000</span></div>
<div class="t" style="left:0.00px;top:115.28px;width:89.46px;text-align:right;font-size:9.7px;margin-top:0.8px;transform:scaleY(1.09);color:#1a1a1a"><span class="d">1.384,460000</span></div>
<div class="t" style="left:90.06px;top:115.28px;width:89.46px;text-align:right;font-size:9.7px;margin-top:0.8px;transform:scaleY(1.09);color:#1a1a1a"><span class="d">4,650000</span></div>
<div class="t" style="left:180.12px;top:115.28px;width:89.46px;text-align:right;font-size:9.7px;margin-top:0.8px;transform:scaleY(1.09);color:#1a1a1a"><span class="d">96,680000</span></div>
<div class="t" style="left:270.18px;top:115.28px;width:89.46px;text-align:right;font-size:9.7px;margin-top:0.8px;transform:scaleY(1.09);color:#1a1a1a"><span class="d">52,600000</span></div>
<div class="t" style="left:360.24px;top:115.28px;width:89.46px;text-align:right;font-size:9.7px;margin-top:0.8px;transform:scaleY(1.09);color:#1a1a1a"><span class="d">3,000000</span></div>
<div class="t" style="left:450.30px;top:115.28px;width:89.46px;text-align:right;font-size:9.7px;margin-top:0.8px;transform:scaleY(1.09);color:#1a1a1a"><span class="d">0,000000</span></div>
<div class="t" style="left:540.36px;top:115.28px;width:89.46px;text-align:right;font-size:9.7px;margin-top:0.8px;transform:scaleY(1.09);color:#1a1a1a"><span class="d">523,630000</span></div>
<div class="t" style="left:630.42px;top:115.28px;width:89.46px;text-align:right;font-size:9.7px;margin-top:0.8px;transform:scaleY(1.09);color:#1a1a1a"><span class="d">3,730000</span></div>
<div class="t" style="left:720.48px;top:115.28px;width:89.46px;text-align:right;font-size:9.7px;margin-top:0.8px;transform:scaleY(1.09);color:#1a1a1a"><span class="d">35,580000</span></div>
<div class="t" style="left:0.00px;top:129.69px;width:89.46px;text-align:right;font-size:9.7px;margin-top:0.8px;transform:scaleY(1.09);color:#1a1a1a"><span class="d">1.384,460000</span></div>
<div class="t" style="left:90.06px;top:129.69px;width:89.46px;text-align:right;font-size:9.7px;margin-top:0.8px;transform:scaleY(1.09);color:#1a1a1a"><span class="d">6,090000</span></div>
<div class="t" style="left:180.12px;top:129.69px;width:89.46px;text-align:right;font-size:9.7px;margin-top:0.8px;transform:scaleY(1.09);color:#1a1a1a"><span class="d">121,250000</span></div>
<div class="t" style="left:270.18px;top:129.69px;width:89.46px;text-align:right;font-size:9.7px;margin-top:0.8px;transform:scaleY(1.09);color:#1a1a1a"><span class="d">52,600000</span></div>
<div class="t" style="left:360.24px;top:129.69px;width:89.46px;text-align:right;font-size:9.7px;margin-top:0.8px;transform:scaleY(1.09);color:#1a1a1a"><span class="d">3,000000</span></div>
<div class="t" style="left:450.30px;top:129.69px;width:89.46px;text-align:right;font-size:9.7px;margin-top:0.8px;transform:scaleY(1.09);color:#1a1a1a"><span class="d">0,000000</span></div>
<div class="t" style="left:540.36px;top:129.69px;width:89.46px;text-align:right;font-size:9.7px;margin-top:0.8px;transform:scaleY(1.09);color:#1a1a1a"><span class="d">523,630000</span></div>
<div class="t" style="left:630.42px;top:129.69px;width:89.46px;text-align:right;font-size:9.7px;margin-top:0.8px;transform:scaleY(1.09);color:#1a1a1a"><span class="d">3,730000</span></div>
<div class="t" style="left:720.48px;top:129.69px;width:89.46px;text-align:right;font-size:9.7px;margin-top:0.8px;transform:scaleY(1.09);color:#1a1a1a"><span class="d">35,580000</span></div>
<div class="t" style="left:0.00px;top:144.10px;width:89.46px;text-align:right;font-size:9.7px;margin-top:0.8px;transform:scaleY(1.09);color:#1a1a1a"><span class="d">1.384,460000</span></div>
<div class="t" style="left:90.06px;top:144.10px;width:89.46px;text-align:right;font-size:9.7px;margin-top:0.8px;transform:scaleY(1.09);color:#1a1a1a"><span class="d">7,650000</span></div>
<div class="t" style="left:180.12px;top:144.10px;width:89.46px;text-align:right;font-size:9.7px;margin-top:0.8px;transform:scaleY(1.09);color:#1a1a1a"><span class="d">147,590000</span></div>
<div class="t" style="left:270.18px;top:144.10px;width:89.46px;text-align:right;font-size:9.7px;margin-top:0.8px;transform:scaleY(1.09);color:#1a1a1a"><span class="d">52,600000</span></div>
<div class="t" style="left:360.24px;top:144.10px;width:89.46px;text-align:right;font-size:9.7px;margin-top:0.8px;transform:scaleY(1.09);color:#1a1a1a"><span class="d">3,000000</span></div>
<div class="t" style="left:450.30px;top:144.10px;width:89.46px;text-align:right;font-size:9.7px;margin-top:0.8px;transform:scaleY(1.09);color:#1a1a1a"><span class="d">0,000000</span></div>
<div class="t" style="left:540.36px;top:144.10px;width:89.46px;text-align:right;font-size:9.7px;margin-top:0.8px;transform:scaleY(1.09);color:#1a1a1a"><span class="d">523,630000</span></div>
<div class="t" style="left:630.42px;top:144.10px;width:89.46px;text-align:right;font-size:9.7px;margin-top:0.8px;transform:scaleY(1.09);color:#1a1a1a"><span class="d">3,730000</span></div>
<div class="t" style="left:720.48px;top:144.10px;width:89.46px;text-align:right;font-size:9.7px;margin-top:0.8px;transform:scaleY(1.09);color:#1a1a1a"><span class="d">35,580000</span></div>
<div class="t" style="left:0.00px;top:158.51px;width:89.46px;text-align:right;font-size:9.7px;margin-top:0.8px;transform:scaleY(1.09);color:#1a1a1a"><span class="d">1.384,460000</span></div>
<div class="t" style="left:90.06px;top:158.51px;width:89.46px;text-align:right;font-size:9.7px;margin-top:0.8px;transform:scaleY(1.09);color:#1a1a1a"><span class="d">0,000000</span></div>
<div class="t" style="left:180.12px;top:158.51px;width:89.46px;text-align:right;font-size:9.7px;margin-top:0.8px;transform:scaleY(1.09);color:#1a1a1a"><span class="d">208,480000</span></div>
<div class="t" style="left:270.18px;top:158.51px;width:89.46px;text-align:right;font-size:9.7px;margin-top:0.8px;transform:scaleY(1.09);color:#1a1a1a"><span class="d">52,600000</span></div>
<div class="t" style="left:360.24px;top:158.51px;width:89.46px;text-align:right;font-size:9.7px;margin-top:0.8px;transform:scaleY(1.09);color:#1a1a1a"><span class="d">11,000000</span></div>
<div class="t" style="left:450.30px;top:158.51px;width:89.46px;text-align:right;font-size:9.7px;margin-top:0.8px;transform:scaleY(1.09);color:#1a1a1a"><span class="d">0,000000</span></div>
<div class="t" style="left:540.36px;top:158.51px;width:89.46px;text-align:right;font-size:9.7px;margin-top:0.8px;transform:scaleY(1.09);color:#1a1a1a"><span class="d">0,000000</span></div>
<div class="t" style="left:630.42px;top:158.51px;width:89.46px;text-align:right;font-size:9.7px;margin-top:0.8px;transform:scaleY(1.09);color:#1a1a1a"><span class="d">3,730000</span></div>
<div class="t" style="left:720.48px;top:158.51px;width:89.46px;text-align:right;font-size:9.7px;margin-top:0.8px;transform:scaleY(1.09);color:#1a1a1a"><span class="d">35,580000</span></div>
<div class="t" style="left:0.00px;top:172.92px;width:89.46px;text-align:right;font-size:9.7px;margin-top:0.8px;transform:scaleY(1.09);color:#1a1a1a"><span class="d">1.463,560000</span></div>
<div class="t" style="left:90.06px;top:172.92px;width:89.46px;text-align:right;font-size:9.7px;margin-top:0.8px;transform:scaleY(1.09);color:#1a1a1a"><span class="d">0,000000</span></div>
<div class="t" style="left:180.12px;top:172.92px;width:89.46px;text-align:right;font-size:9.7px;margin-top:0.8px;transform:scaleY(1.09);color:#1a1a1a"><span class="d">0,000000</span></div>
<div class="t" style="left:270.18px;top:172.92px;width:89.46px;text-align:right;font-size:9.7px;margin-top:0.8px;transform:scaleY(1.09);color:#1a1a1a"><span class="d">55,600000</span></div>
<div class="t" style="left:360.24px;top:172.92px;width:89.46px;text-align:right;font-size:9.7px;margin-top:0.8px;transform:scaleY(1.09);color:#1a1a1a"><span class="d">0,000000</span></div>
<div class="t" style="left:450.30px;top:172.92px;width:89.46px;text-align:right;font-size:9.7px;margin-top:0.8px;transform:scaleY(1.09);color:#1a1a1a"><span class="d">0,000000</span></div>
<div class="t" style="left:540.36px;top:172.92px;width:89.46px;text-align:right;font-size:9.7px;margin-top:0.8px;transform:scaleY(1.09);color:#1a1a1a"><span class="d">523,630000</span></div>
<div class="t" style="left:630.42px;top:172.92px;width:89.46px;text-align:right;font-size:9.7px;margin-top:0.8px;transform:scaleY(1.09);color:#1a1a1a"><span class="d">3,730000</span></div>
<div class="t" style="left:720.48px;top:172.92px;width:89.46px;text-align:right;font-size:9.7px;margin-top:0.8px;transform:scaleY(1.09);color:#1a1a1a"><span class="d">35,580000</span></div>
<div class="t" style="left:0.00px;top:187.33px;width:89.46px;text-align:right;font-size:9.7px;margin-top:0.8px;transform:scaleY(1.09);color:#1a1a1a"><span class="d">1.463,560000</span></div>
<div class="t" style="left:90.06px;top:187.33px;width:89.46px;text-align:right;font-size:9.7px;margin-top:0.8px;transform:scaleY(1.09);color:#1a1a1a"><span class="d">1,050000</span></div>
<div class="t" style="left:180.12px;top:187.33px;width:89.46px;text-align:right;font-size:9.7px;margin-top:0.8px;transform:scaleY(1.09);color:#1a1a1a"><span class="d">21,170000</span></div>
<div class="t" style="left:270.18px;top:187.33px;width:89.46px;text-align:right;font-size:9.7px;margin-top:0.8px;transform:scaleY(1.09);color:#1a1a1a"><span class="d">55,600000</span></div>
<div class="t" style="left:360.24px;top:187.33px;width:89.46px;text-align:right;font-size:9.7px;margin-top:0.8px;transform:scaleY(1.09);color:#1a1a1a"><span class="d">0,000000</span></div>
<div class="t" style="left:450.30px;top:187.33px;width:89.46px;text-align:right;font-size:9.7px;margin-top:0.8px;transform:scaleY(1.09);color:#1a1a1a"><span class="d">0,000000</span></div>
<div class="t" style="left:540.36px;top:187.33px;width:89.46px;text-align:right;font-size:9.7px;margin-top:0.8px;transform:scaleY(1.09);color:#1a1a1a"><span class="d">523,630000</span></div>
<div class="t" style="left:630.42px;top:187.33px;width:89.46px;text-align:right;font-size:9.7px;margin-top:0.8px;transform:scaleY(1.09);color:#1a1a1a"><span class="d">3,730000</span></div>
<div class="t" style="left:720.48px;top:187.33px;width:89.46px;text-align:right;font-size:9.7px;margin-top:0.8px;transform:scaleY(1.09);color:#1a1a1a"><span class="d">35,580000</span></div>
<div class="t" style="left:0.00px;top:201.74px;width:89.46px;text-align:right;font-size:9.7px;margin-top:0.8px;transform:scaleY(1.09);color:#1a1a1a"><span class="d">1.463,560000</span></div>
<div class="t" style="left:90.06px;top:201.74px;width:89.46px;text-align:right;font-size:9.7px;margin-top:0.8px;transform:scaleY(1.09);color:#1a1a1a"><span class="d">2,490000</span></div>
<div class="t" style="left:180.12px;top:201.74px;width:89.46px;text-align:right;font-size:9.7px;margin-top:0.8px;transform:scaleY(1.09);color:#1a1a1a"><span class="d">45,750000</span></div>
<div class="t" style="left:270.18px;top:201.74px;width:89.46px;text-align:right;font-size:9.7px;margin-top:0.8px;transform:scaleY(1.09);color:#1a1a1a"><span class="d">55,600000</span></div>
<div class="t" style="left:360.24px;top:201.74px;width:89.46px;text-align:right;font-size:9.7px;margin-top:0.8px;transform:scaleY(1.09);color:#1a1a1a"><span class="d">0,000000</span></div>
<div class="t" style="left:450.30px;top:201.74px;width:89.46px;text-align:right;font-size:9.7px;margin-top:0.8px;transform:scaleY(1.09);color:#1a1a1a"><span class="d">0,000000</span></div>
<div class="t" style="left:540.36px;top:201.74px;width:89.46px;text-align:right;font-size:9.7px;margin-top:0.8px;transform:scaleY(1.09);color:#1a1a1a"><span class="d">523,630000</span></div>
<div class="t" style="left:630.42px;top:201.74px;width:89.46px;text-align:right;font-size:9.7px;margin-top:0.8px;transform:scaleY(1.09);color:#1a1a1a"><span class="d">3,730000</span></div>
<div class="t" style="left:720.48px;top:201.74px;width:89.46px;text-align:right;font-size:9.7px;margin-top:0.8px;transform:scaleY(1.09);color:#1a1a1a"><span class="d">35,580000</span></div>
<div class="t" style="left:0.00px;top:216.15px;width:89.46px;text-align:right;font-size:9.7px;margin-top:0.8px;transform:scaleY(1.09);color:#1a1a1a"><span class="d">1.463,560000</span></div>
<div class="t" style="left:90.06px;top:216.15px;width:89.46px;text-align:right;font-size:9.7px;margin-top:0.8px;transform:scaleY(1.09);color:#1a1a1a"><span class="d">4,050000</span></div>
<div class="t" style="left:180.12px;top:216.15px;width:89.46px;text-align:right;font-size:9.7px;margin-top:0.8px;transform:scaleY(1.09);color:#1a1a1a"><span class="d">72,090000</span></div>
<div class="t" style="left:270.18px;top:216.15px;width:89.46px;text-align:right;font-size:9.7px;margin-top:0.8px;transform:scaleY(1.09);color:#1a1a1a"><span class="d">55,600000</span></div>
<div class="t" style="left:360.24px;top:216.15px;width:89.46px;text-align:right;font-size:9.7px;margin-top:0.8px;transform:scaleY(1.09);color:#1a1a1a"><span class="d">0,000000</span></div>
<div class="t" style="left:450.30px;top:216.15px;width:89.46px;text-align:right;font-size:9.7px;margin-top:0.8px;transform:scaleY(1.09);color:#1a1a1a"><span class="d">0,000000</span></div>
<div class="t" style="left:540.36px;top:216.15px;width:89.46px;text-align:right;font-size:9.7px;margin-top:0.8px;transform:scaleY(1.09);color:#1a1a1a"><span class="d">523,630000</span></div>
<div class="t" style="left:630.42px;top:216.15px;width:89.46px;text-align:right;font-size:9.7px;margin-top:0.8px;transform:scaleY(1.09);color:#1a1a1a"><span class="d">3,730000</span></div>
<div class="t" style="left:720.48px;top:216.15px;width:89.46px;text-align:right;font-size:9.7px;margin-top:0.8px;transform:scaleY(1.09);color:#1a1a1a"><span class="d">35,580000</span></div>
<div class="t" style="left:0.00px;top:230.56px;width:89.46px;text-align:right;font-size:9.7px;margin-top:0.8px;transform:scaleY(1.09);color:#1a1a1a"><span class="d">1.463,560000</span></div>
<div class="t" style="left:90.06px;top:230.56px;width:89.46px;text-align:right;font-size:9.7px;margin-top:0.8px;transform:scaleY(1.09);color:#1a1a1a"><span class="d">0,000000</span></div>
<div class="t" style="left:180.12px;top:230.56px;width:89.46px;text-align:right;font-size:9.7px;margin-top:0.8px;transform:scaleY(1.09);color:#1a1a1a"><span class="d">129,380000</span></div>
<div class="t" style="left:270.18px;top:230.56px;width:89.46px;text-align:right;font-size:9.7px;margin-top:0.8px;transform:scaleY(1.09);color:#1a1a1a"><span class="d">55,600000</span></div>
<div class="t" style="left:360.24px;top:230.56px;width:89.46px;text-align:right;font-size:9.7px;margin-top:0.8px;transform:scaleY(1.09);color:#1a1a1a"><span class="d">8,000000</span></div>
<div class="t" style="left:450.30px;top:230.56px;width:89.46px;text-align:right;font-size:9.7px;margin-top:0.8px;transform:scaleY(1.09);color:#1a1a1a"><span class="d">0,000000</span></div>
<div class="t" style="left:540.36px;top:230.56px;width:89.46px;text-align:right;font-size:9.7px;margin-top:0.8px;transform:scaleY(1.09);color:#1a1a1a"><span class="d">0,000000</span></div>
<div class="t" style="left:630.42px;top:230.56px;width:89.46px;text-align:right;font-size:9.7px;margin-top:0.8px;transform:scaleY(1.09);color:#1a1a1a"><span class="d">3,730000</span></div>
<div class="t" style="left:720.48px;top:230.56px;width:89.46px;text-align:right;font-size:9.7px;margin-top:0.8px;transform:scaleY(1.09);color:#1a1a1a"><span class="d">35,580000</span></div>
<div class="t" style="left:0.00px;top:244.97px;width:89.46px;text-align:right;font-size:9.7px;margin-top:0.8px;transform:scaleY(1.09);color:#1a1a1a"><span class="d">1.557,980000</span></div>
<div class="t" style="left:90.06px;top:244.97px;width:89.46px;text-align:right;font-size:9.7px;margin-top:0.8px;transform:scaleY(1.09);color:#1a1a1a"><span class="d">0,000000</span></div>
<div class="t" style="left:180.12px;top:244.97px;width:89.46px;text-align:right;font-size:9.7px;margin-top:0.8px;transform:scaleY(1.09);color:#1a1a1a"><span class="d">0,000000</span></div>
<div class="t" style="left:270.18px;top:244.97px;width:89.46px;text-align:right;font-size:9.7px;margin-top:0.8px;transform:scaleY(1.09);color:#1a1a1a"><span class="d">63,200000</span></div>
<div class="t" style="left:360.24px;top:244.97px;width:89.46px;text-align:right;font-size:9.7px;margin-top:0.8px;transform:scaleY(1.09);color:#1a1a1a"><span class="d">0,000000</span></div>
<div class="t" style="left:450.30px;top:244.97px;width:89.46px;text-align:right;font-size:9.7px;margin-top:0.8px;transform:scaleY(1.09);color:#1a1a1a"><span class="d">0,000000</span></div>
<div class="t" style="left:540.36px;top:244.97px;width:89.46px;text-align:right;font-size:9.7px;margin-top:0.8px;transform:scaleY(1.09);color:#1a1a1a"><span class="d">531,770000</span></div>
<div class="t" style="left:630.42px;top:244.97px;width:89.46px;text-align:right;font-size:9.7px;margin-top:0.8px;transform:scaleY(1.09);color:#1a1a1a"><span class="d">4,340000</span></div>
<div class="t" style="left:720.48px;top:244.97px;width:89.46px;text-align:right;font-size:9.7px;margin-top:0.8px;transform:scaleY(1.09);color:#1a1a1a"><span class="d">41,460000</span></div>
<div class="t" style="left:0.00px;top:259.38px;width:89.46px;text-align:right;font-size:9.7px;margin-top:0.8px;transform:scaleY(1.09);color:#1a1a1a"><span class="d">1.557,980000</span></div>
<div class="t" style="left:90.06px;top:259.38px;width:89.46px;text-align:right;font-size:9.7px;margin-top:0.8px;transform:scaleY(1.09);color:#1a1a1a"><span class="d">1,630000</span></div>
<div class="t" style="left:180.12px;top:259.38px;width:89.46px;text-align:right;font-size:9.7px;margin-top:0.8px;transform:scaleY(1.09);color:#1a1a1a"><span class="d">37,010000</span></div>
<div class="t" style="left:270.18px;top:259.38px;width:89.46px;text-align:right;font-size:9.7px;margin-top:0.8px;transform:scaleY(1.09);color:#1a1a1a"><span class="d">63,200000</span></div>
<div class="t" style="left:360.24px;top:259.38px;width:89.46px;text-align:right;font-size:9.7px;margin-top:0.8px;transform:scaleY(1.09);color:#1a1a1a"><span class="d">0,000000</span></div>
<div class="t" style="left:450.30px;top:259.38px;width:89.46px;text-align:right;font-size:9.7px;margin-top:0.8px;transform:scaleY(1.09);color:#1a1a1a"><span class="d">0,000000</span></div>
<div class="t" style="left:540.36px;top:259.38px;width:89.46px;text-align:right;font-size:9.7px;margin-top:0.8px;transform:scaleY(1.09);color:#1a1a1a"><span class="d">531,770000</span></div>
<div class="t" style="left:630.42px;top:259.38px;width:89.46px;text-align:right;font-size:9.7px;margin-top:0.8px;transform:scaleY(1.09);color:#1a1a1a"><span class="d">4,340000</span></div>
<div class="t" style="left:720.48px;top:259.38px;width:89.46px;text-align:right;font-size:9.7px;margin-top:0.8px;transform:scaleY(1.09);color:#1a1a1a"><span class="d">41,460000</span></div>
<div class="t" style="left:0.00px;top:273.79px;width:89.46px;text-align:right;font-size:9.7px;margin-top:0.8px;transform:scaleY(1.09);color:#1a1a1a"><span class="d">1.557,980000</span></div>
<div class="t" style="left:90.06px;top:273.79px;width:89.46px;text-align:right;font-size:9.7px;margin-top:0.8px;transform:scaleY(1.09);color:#1a1a1a"><span class="d">3,980000</span></div>
<div class="t" style="left:180.12px;top:273.79px;width:89.46px;text-align:right;font-size:9.7px;margin-top:0.8px;transform:scaleY(1.09);color:#1a1a1a"><span class="d">80,490000</span></div>
<div class="t" style="left:270.18px;top:273.79px;width:89.46px;text-align:right;font-size:9.7px;margin-top:0.8px;transform:scaleY(1.09);color:#1a1a1a"><span class="d">63,200000</span></div>
<div class="t" style="left:360.24px;top:273.79px;width:89.46px;text-align:right;font-size:9.7px;margin-top:0.8px;transform:scaleY(1.09);color:#1a1a1a"><span class="d">0,400000</span></div>
<div class="t" style="left:450.30px;top:273.79px;width:89.46px;text-align:right;font-size:9.7px;margin-top:0.8px;transform:scaleY(1.09);color:#1a1a1a"><span class="d">0,000000</span></div>
<div class="t" style="left:540.36px;top:273.79px;width:89.46px;text-align:right;font-size:9.7px;margin-top:0.8px;transform:scaleY(1.09);color:#1a1a1a"><span class="d">531,770000</span></div>
<div class="t" style="left:630.42px;top:273.79px;width:89.46px;text-align:right;font-size:9.7px;margin-top:0.8px;transform:scaleY(1.09);color:#1a1a1a"><span class="d">4,340000</span></div>
<div class="t" style="left:720.48px;top:273.79px;width:89.46px;text-align:right;font-size:9.7px;margin-top:0.8px;transform:scaleY(1.09);color:#1a1a1a"><span class="d">41,460000</span></div>
</div>
<div class="a" style="left:938px;top:476.0px;width:13.5px;height:285.0px;background:#f4f3ec"></div>
<div class="a" style="left:938.3px;top:476.5px;width:13px;height:13.5px;background:linear-gradient(180deg,#fdfdfb,#e8e6dc);border:1px solid #b8b6aa;border-radius:1px"></div>
<svg style="left:0;top:0" width="957" height="800"><path d="M941.3 485.05 L944.8 481.45 L948.3 485.05 Z" fill="#4a4a44"/></svg>
<div class="a" style="left:938.3px;top:748.2px;width:13px;height:12.5px;background:linear-gradient(180deg,#fdfdfb,#e8e6dc);border:1px solid #b8b6aa;border-radius:1px"></div>
<svg style="left:0;top:0" width="957" height="800"><path d="M941.3 752.6500000000001 L944.8 756.25 L948.3 752.6500000000001 Z" fill="#4a4a44"/></svg>
<div class="a" style="left:938.5px;top:490.3px;width:12.8px;height:100px;background:linear-gradient(90deg,#c4d4f0,#a8c0e8 40%,#94b0e0);border:1px solid #7890c0;border-radius:1px"></div>
<div class="a" style="left:941px;top:535.5px;width:7px;height:1px;background:#e4ecf8;box-shadow:0 1px 0 #8ca4cc"></div>
<div class="a" style="left:941px;top:538.0px;width:7px;height:1px;background:#e4ecf8;box-shadow:0 1px 0 #8ca4cc"></div>
<div class="a" style="left:941px;top:540.5px;width:7px;height:1px;background:#e4ecf8;box-shadow:0 1px 0 #8ca4cc"></div>
<div class="a" style="left:941px;top:543.0px;width:7px;height:1px;background:#e4ecf8;box-shadow:0 1px 0 #8ca4cc"></div>
<div class="a" style="left:941px;top:545.5px;width:7px;height:1px;background:#e4ecf8;box-shadow:0 1px 0 #8ca4cc"></div>
<div class="a" style="left:6px;top:761.0px;width:135.00px;height:14.5px;background:#f2efe4"></div>
<div class="a" style="left:141.00px;top:761.0px;width:797.00px;height:14.5px;background:#f4f3ec"></div>
<div class="a" style="left:938px;top:761.0px;width:13.5px;height:14.5px;background:#f0eee4"></div>
<div class="a" style="left:141.3px;top:761.3px;width:13.3px;height:13.5px;background:linear-gradient(180deg,#fdfdfb,#e8e6dc);border:1px solid #b8b6aa;border-radius:1px"></div>
<svg style="left:0;top:0" width="957" height="800"><path d="M149.75000000000003 764.55 L146.15 768.05 L149.75000000000003 771.55 Z" fill="#4a4a44"/></svg>
<div class="a" style="left:924.8px;top:761.3px;width:13px;height:13.5px;background:linear-gradient(180deg,#fdfdfb,#e8e6dc);border:1px solid #b8b6aa;border-radius:1px"></div>
<svg style="left:0;top:0" width="957" height="800"><path d="M929.5 764.55 L933.0999999999999 768.05 L929.5 771.55 Z" fill="#4a4a44"/></svg>
<div class="a" style="left:155.5px;top:761.3px;width:339.5px;height:13.5px;background:linear-gradient(180deg,#b8ccf0,#a4bce8 50%,#90acdc);border:1px solid #7890c0;border-radius:1px"></div>
<div class="a" style="left:320.5px;top:764.5px;width:1px;height:7px;background:#e4ecf8;box-shadow:1px 0 0 #8ca4cc"></div>
<div class="a" style="left:323.0px;top:764.5px;width:1px;height:7px;background:#e4ecf8;box-shadow:1px 0 0 #8ca4cc"></div>
<div class="a" style="left:325.5px;top:764.5px;width:1px;height:7px;background:#e4ecf8;box-shadow:1px 0 0 #8ca4cc"></div>
<div class="a" style="left:328.0px;top:764.5px;width:1px;height:7px;background:#e4ecf8;box-shadow:1px 0 0 #8ca4cc"></div>
<div class="a" style="left:330.5px;top:764.5px;width:1px;height:7px;background:#e4ecf8;box-shadow:1px 0 0 #8ca4cc"></div>
<div class="a" style="left:5px;top:775.3px;width:946.5px;height:1.2px;background:#9c9a90"></div>
<div class="a" style="left:951px;top:459px;width:1px;height:317px;background:#c8c6bc"></div>
<div class="a" style="left:4px;top:777px;width:948px;height:1.3px;background:#8c8a84"></div>
<div class="a" style="left:4px;top:778.3px;width:948px;height:15.7px;background:#f1efe4"></div>
<div class="a" style="left:769.3px;top:778px;width:1.5px;height:16px;background:#fbfaf4"></div>
<div class="a" style="left:770.8px;top:777.5px;width:1.5px;height:16.5px;background:#8c8a84"></div>
<div class="a" style="left:860.7px;top:778px;width:1.5px;height:16px;background:#fbfaf4"></div>
<div class="a" style="left:862.2px;top:777.5px;width:1.5px;height:16.5px;background:#8c8a84"></div>
<svg style="left:775px;top:780px" width="14" height="13"><path d="M1 12.5 Q0.5 6.8 6 6.6 Q11.5 6.8 11.5 12.5 Z" fill="#d8542a"/><path d="M2.5 11 Q2.5 8 5.5 7.6" stroke="#f4a070" stroke-width="1.2" fill="none"/><circle cx="6" cy="3.6" r="2.9" fill="#f0c888"/><path d="M3.1 3.4 Q3.2 0.6 6 0.6 Q8.8 0.6 8.9 3.4 Q7.5 2 6 2.2 Q4.5 2 3.1 3.4 Z" fill="#c09030"/></svg>
<svg style="left:866px;top:780px" width="14" height="13"><path d="M1 12.5 Q0.5 6.8 6 6.6 Q11.5 6.8 11.5 12.5 Z" fill="#d8542a"/><path d="M2.5 11 Q2.5 8 5.5 7.6" stroke="#f4a070" stroke-width="1.2" fill="none"/><circle cx="6" cy="3.6" r="2.9" fill="#f0c888"/><path d="M3.1 3.4 Q3.2 0.6 6 0.6 Q8.8 0.6 8.9 3.4 Q7.5 2 6 2.2 Q4.5 2 3.1 3.4 Z" fill="#c09030"/></svg>
<svg style="left:866px;top:780px" width="14" height="13"><circle cx="9.3" cy="8.7" r="4" fill="#1c64c4" stroke="#c8e0f8" stroke-width="0.6"/><rect x="8.75" y="5.6" width="1.2" height="1.2" fill="#fff"/><rect x="8.75" y="7.6" width="1.2" height="3.6" fill="#fff"/></svg>
<div class="a" style="left:506px;top:611.7px;width:193.5px;height:13.6px;background:rgba(250,228,150,.93);border:1px solid #d8b858"></div>
<div class="t" style="left:508.8px;top:611.3px;;color:#202010">Incremento Progress. Ec. Orizzontale CCNL</div>
<svg style="left:505px;top:594px" width="13" height="18"><path d="M1 1 L1 13.5 L4 10.8 L6.5 16 L8.6 15 L6.3 10.2 L10.5 10.2 Z" fill="rgba(255,255,255,.85)" stroke="#888" stroke-width="1"/></svg>
</body></html>
